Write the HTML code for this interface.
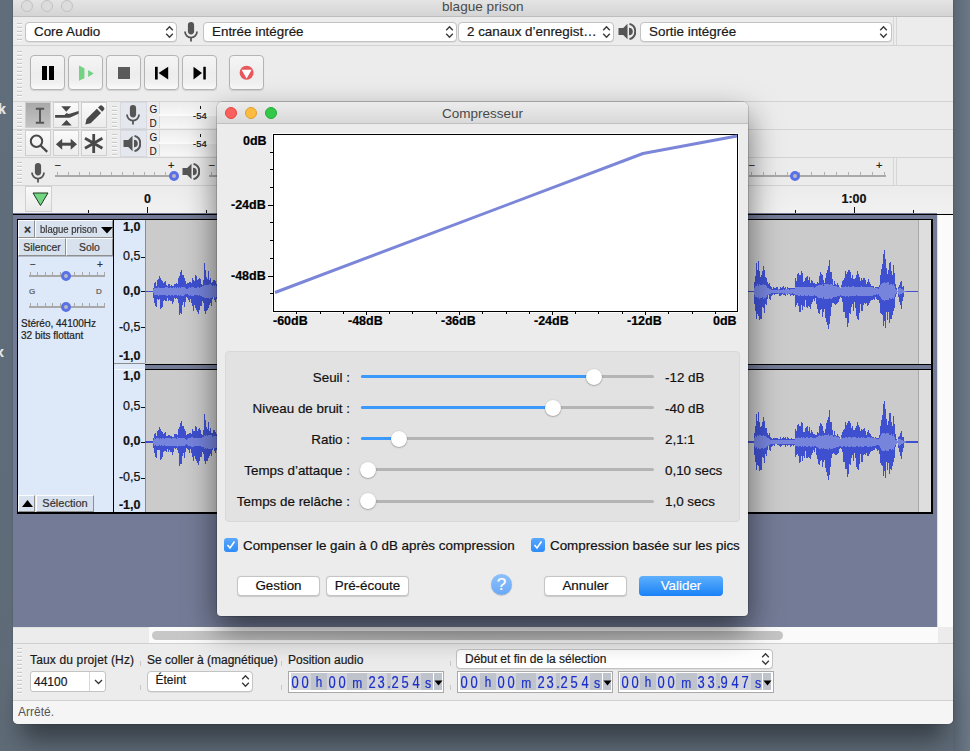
<!DOCTYPE html><html><head><meta charset="utf-8"><style>
html,body{margin:0;padding:0;} div{-webkit-text-stroke:0.2px;} .b{-webkit-text-stroke:0;}
body{width:970px;height:751px;overflow:hidden;position:relative;font-family:"Liberation Sans", sans-serif;
background:linear-gradient(180deg,#5f6b78 0%,#5d6975 60%,#555e68 100%);}
</style></head><body><div style="position:absolute;left:0px;top:0px;width:970px;height:751px;background:linear-gradient(180deg,#606d7a 0%,#5e6b78 70%,#5f6b77 100%);"></div><div style="position:absolute;left:953px;top:0px;width:17px;height:751px;background:linear-gradient(90deg,#5a6673,#6b7885);"></div><div style="position:absolute;left:-2px;top:101px;white-space:nowrap;font-size:14px;font-weight:bold;color:#e8e8e8;">k</div><div style="position:absolute;left:-4px;top:344px;white-space:nowrap;font-size:14px;font-weight:bold;color:#e8e8e8;">x</div><div style="position:absolute;left:22px;top:690px;width:922px;height:50px;background:rgba(20,24,30,0.55);filter:blur(12px);"></div><div style="position:absolute;left:13px;top:0px;width:940px;height:724px;background:#ececec;border-radius:0 0 5px 5px;overflow:hidden;box-shadow:0 0 1.5px rgba(0,0,0,0.35);"></div><div style="position:absolute;left:13px;top:0px;width:940px;height:17px;background:linear-gradient(#e4e4e4,#d4d4d4);border-bottom:1px solid #bdbdbd;box-sizing:border-box;"></div><div style="position:absolute;left:21px;top:-0.5px;width:12px;height:12px;border-radius:50%;background:#dcdcdc;border:1px solid #c2c2c2;box-sizing:border-box;"></div><div style="position:absolute;left:41px;top:-0.5px;width:12px;height:12px;border-radius:50%;background:#dcdcdc;border:1px solid #c2c2c2;box-sizing:border-box;"></div><div style="position:absolute;left:61px;top:-0.5px;width:12px;height:12px;border-radius:50%;background:#dcdcdc;border:1px solid #c2c2c2;box-sizing:border-box;"></div><div style="position:absolute;left:442px;top:-1.5px;white-space:nowrap;font-size:13.6px;color:#4a4a4a;line-height:16px;-webkit-text-stroke:0;">blague prison</div><div style="position:absolute;left:13px;top:45px;width:940px;height:1px;background:#d3d3d3;"></div><div style="position:absolute;left:13px;top:101px;width:940px;height:1px;background:#d3d3d3;"></div><div style="position:absolute;left:13px;top:129px;width:940px;height:1px;background:#d3d3d3;"></div><div style="position:absolute;left:13px;top:157px;width:940px;height:1px;background:#d3d3d3;"></div><div style="position:absolute;left:13px;top:185px;width:940px;height:1px;background:#d3d3d3;"></div><div style="position:absolute;left:17px;top:23px;width:5px;height:1px;background:#c9c9c9;"></div><div style="position:absolute;left:17px;top:24px;width:5px;height:1px;background:#fafafa;"></div><div style="position:absolute;left:17px;top:27px;width:5px;height:1px;background:#c9c9c9;"></div><div style="position:absolute;left:17px;top:28px;width:5px;height:1px;background:#fafafa;"></div><div style="position:absolute;left:17px;top:31px;width:5px;height:1px;background:#c9c9c9;"></div><div style="position:absolute;left:17px;top:32px;width:5px;height:1px;background:#fafafa;"></div><div style="position:absolute;left:17px;top:35px;width:5px;height:1px;background:#c9c9c9;"></div><div style="position:absolute;left:17px;top:36px;width:5px;height:1px;background:#fafafa;"></div><div style="position:absolute;left:17px;top:39px;width:5px;height:1px;background:#c9c9c9;"></div><div style="position:absolute;left:17px;top:40px;width:5px;height:1px;background:#fafafa;"></div><div style="position:absolute;left:25px;top:21.5px;width:152px;height:20px;background:#fff;border:1px solid #c3c3c3;border-radius:4px;box-sizing:border-box;box-shadow:0 0.5px 0.5px rgba(0,0,0,0.12);"></div><div style="position:absolute;left:34px;top:23.5px;white-space:nowrap;font-size:13.4px;color:#1a1a1a;line-height:16px;">Core Audio</div><svg style="position:absolute;left:164.5px;top:24.5px" width="9" height="14" viewBox="0 0 9 14"><path d="M1.2 5.2 L4.5 1.8 L7.8 5.2 M1.2 8.8 L4.5 12.2 L7.8 8.8" fill="none" stroke="#3a3a3a" stroke-width="1.4"/></svg><svg style="position:absolute;left:184px;top:22px" width="14.0" height="20.0" viewBox="0 0 14 20"><rect x="3.9" y="0" width="6.2" height="12.4" rx="3.1" fill="#555"/><path d="M1 9.6 a6 6 0 0 0 12 0" fill="none" stroke="#555" stroke-width="1.8"/><path d="M7 15.4 v4.2" stroke="#555" stroke-width="1.8"/></svg><div style="position:absolute;left:203px;top:21.5px;width:254px;height:20px;background:#fff;border:1px solid #c3c3c3;border-radius:4px;box-sizing:border-box;box-shadow:0 0.5px 0.5px rgba(0,0,0,0.12);"></div><div style="position:absolute;left:212px;top:23.5px;white-space:nowrap;font-size:13.4px;color:#1a1a1a;line-height:16px;">Entrée intégrée</div><svg style="position:absolute;left:444.5px;top:24.5px" width="9" height="14" viewBox="0 0 9 14"><path d="M1.2 5.2 L4.5 1.8 L7.8 5.2 M1.2 8.8 L4.5 12.2 L7.8 8.8" fill="none" stroke="#3a3a3a" stroke-width="1.4"/></svg><div style="position:absolute;left:458px;top:21.5px;width:156px;height:20px;background:#fff;border:1px solid #c3c3c3;border-radius:4px;box-sizing:border-box;box-shadow:0 0.5px 0.5px rgba(0,0,0,0.12);"></div><div style="position:absolute;left:467px;top:23.5px;white-space:nowrap;font-size:13.4px;color:#1a1a1a;line-height:16px;">2 canaux d’enregist…</div><svg style="position:absolute;left:601.5px;top:24.5px" width="9" height="14" viewBox="0 0 9 14"><path d="M1.2 5.2 L4.5 1.8 L7.8 5.2 M1.2 8.8 L4.5 12.2 L7.8 8.8" fill="none" stroke="#3a3a3a" stroke-width="1.4"/></svg><svg style="position:absolute;left:617.5px;top:23px" width="18.0" height="17.0" viewBox="0 0 18 17"><path d="M0.5 5 h4.7 l4.3 -4.2 v15.4 l-4.3 -4.2 h-4.7z" fill="#555"/><path d="M11 4.7 a3.8 3.8 0 0 1 0 7.6z" fill="#555"/><path d="M11.5 0.9 a7.9 7.9 0 0 1 0 15.2" fill="none" stroke="#555" stroke-width="2"/></svg><div style="position:absolute;left:640px;top:21.5px;width:251.5px;height:20px;background:#fff;border:1px solid #c3c3c3;border-radius:4px;box-sizing:border-box;box-shadow:0 0.5px 0.5px rgba(0,0,0,0.12);"></div><div style="position:absolute;left:649px;top:23.5px;white-space:nowrap;font-size:13.4px;color:#1a1a1a;line-height:16px;">Sortie intégrée</div><svg style="position:absolute;left:879.0px;top:24.5px" width="9" height="14" viewBox="0 0 9 14"><path d="M1.2 5.2 L4.5 1.8 L7.8 5.2 M1.2 8.8 L4.5 12.2 L7.8 8.8" fill="none" stroke="#3a3a3a" stroke-width="1.4"/></svg><div style="position:absolute;left:893px;top:17px;width:1px;height:28px;background:#d6d6d6;"></div><div style="position:absolute;left:896px;top:17px;width:1px;height:28px;background:#d6d6d6;"></div><div style="position:absolute;left:17px;top:51px;width:5px;height:1px;background:#c9c9c9;"></div><div style="position:absolute;left:17px;top:52px;width:5px;height:1px;background:#fafafa;"></div><div style="position:absolute;left:17px;top:55px;width:5px;height:1px;background:#c9c9c9;"></div><div style="position:absolute;left:17px;top:56px;width:5px;height:1px;background:#fafafa;"></div><div style="position:absolute;left:17px;top:59px;width:5px;height:1px;background:#c9c9c9;"></div><div style="position:absolute;left:17px;top:60px;width:5px;height:1px;background:#fafafa;"></div><div style="position:absolute;left:17px;top:63px;width:5px;height:1px;background:#c9c9c9;"></div><div style="position:absolute;left:17px;top:64px;width:5px;height:1px;background:#fafafa;"></div><div style="position:absolute;left:17px;top:67px;width:5px;height:1px;background:#c9c9c9;"></div><div style="position:absolute;left:17px;top:68px;width:5px;height:1px;background:#fafafa;"></div><div style="position:absolute;left:17px;top:71px;width:5px;height:1px;background:#c9c9c9;"></div><div style="position:absolute;left:17px;top:72px;width:5px;height:1px;background:#fafafa;"></div><div style="position:absolute;left:17px;top:75px;width:5px;height:1px;background:#c9c9c9;"></div><div style="position:absolute;left:17px;top:76px;width:5px;height:1px;background:#fafafa;"></div><div style="position:absolute;left:17px;top:79px;width:5px;height:1px;background:#c9c9c9;"></div><div style="position:absolute;left:17px;top:80px;width:5px;height:1px;background:#fafafa;"></div><div style="position:absolute;left:17px;top:83px;width:5px;height:1px;background:#c9c9c9;"></div><div style="position:absolute;left:17px;top:84px;width:5px;height:1px;background:#fafafa;"></div><div style="position:absolute;left:17px;top:87px;width:5px;height:1px;background:#c9c9c9;"></div><div style="position:absolute;left:17px;top:88px;width:5px;height:1px;background:#fafafa;"></div><div style="position:absolute;left:17px;top:91px;width:5px;height:1px;background:#c9c9c9;"></div><div style="position:absolute;left:17px;top:92px;width:5px;height:1px;background:#fafafa;"></div><div style="position:absolute;left:17px;top:95px;width:5px;height:1px;background:#c9c9c9;"></div><div style="position:absolute;left:17px;top:96px;width:5px;height:1px;background:#fafafa;"></div><div style="position:absolute;left:30px;top:55px;width:35px;height:35px;background:linear-gradient(#f5f5f5,#ededed 55%,#f0f0f0 80%,#fbfbfb);border:1px solid #b4b4b4;border-radius:4px;box-sizing:border-box;box-shadow:0 1px 1px rgba(0,0,0,0.12);"><div style="position:absolute;left:10.7px;top:10.3px;width:5.1px;height:13.4px;background:#000"></div><div style="position:absolute;left:17.8px;top:10.3px;width:5.1px;height:13.4px;background:#000"></div></div><div style="position:absolute;left:68px;top:55px;width:35px;height:35px;background:linear-gradient(#f5f5f5,#ededed 55%,#f0f0f0 80%,#fbfbfb);border:1px solid #b4b4b4;border-radius:4px;box-sizing:border-box;box-shadow:0 1px 1px rgba(0,0,0,0.12);"><svg style="position:absolute;left:-1px;top:-1px" width="35" height="35"><path d="M11 10.5 L16.4 13.2 L16.4 23.3 L11 25.7z" fill="#74d283"/><path d="M20.1 15 L25.7 18.5 L20.1 22z" fill="#74d283"/></svg></div><div style="position:absolute;left:106px;top:55px;width:35px;height:35px;background:linear-gradient(#f5f5f5,#ededed 55%,#f0f0f0 80%,#fbfbfb);border:1px solid #b4b4b4;border-radius:4px;box-sizing:border-box;box-shadow:0 1px 1px rgba(0,0,0,0.12);"><div style="position:absolute;left:10.9px;top:11px;width:11.8px;height:12.2px;background:#5a5a5a"></div></div><div style="position:absolute;left:144px;top:55px;width:35px;height:35px;background:linear-gradient(#f5f5f5,#ededed 55%,#f0f0f0 80%,#fbfbfb);border:1px solid #b4b4b4;border-radius:4px;box-sizing:border-box;box-shadow:0 1px 1px rgba(0,0,0,0.12);"><svg style="position:absolute;left:-1px;top:-1px" width="35" height="35"><rect x="11" y="11.8" width="2.7" height="12.7" fill="#000"/><path d="M24.2 11.8 L14.6 18.1 L24.2 24.5z" fill="#000"/></svg></div><div style="position:absolute;left:182px;top:55px;width:35px;height:35px;background:linear-gradient(#f5f5f5,#ededed 55%,#f0f0f0 80%,#fbfbfb);border:1px solid #b4b4b4;border-radius:4px;box-sizing:border-box;box-shadow:0 1px 1px rgba(0,0,0,0.12);"><svg style="position:absolute;left:-1px;top:-1px" width="35" height="35"><rect x="21.3" y="11.8" width="2.5" height="12.7" fill="#000"/><path d="M11.5 11.8 L20 18.1 L11.5 24.5z" fill="#000"/></svg></div><div style="position:absolute;left:228.5px;top:55px;width:35.5px;height:35px;background:linear-gradient(#f5f5f5,#ededed 55%,#f0f0f0 80%,#fbfbfb);border:1px solid #b4b4b4;border-radius:4px;box-sizing:border-box;box-shadow:0 1px 1px rgba(0,0,0,0.12);"><svg style="position:absolute;left:-1px;top:-1px" width="35" height="35"><circle cx="17.6" cy="17.8" r="7" fill="#e8585a"/><path d="M12.6 14.8 h10 l-5 8.8z" fill="#fff"/></svg></div><div style="position:absolute;left:17px;top:106px;width:5px;height:1px;background:#c9c9c9;"></div><div style="position:absolute;left:17px;top:107px;width:5px;height:1px;background:#fafafa;"></div><div style="position:absolute;left:17px;top:110px;width:5px;height:1px;background:#c9c9c9;"></div><div style="position:absolute;left:17px;top:111px;width:5px;height:1px;background:#fafafa;"></div><div style="position:absolute;left:17px;top:114px;width:5px;height:1px;background:#c9c9c9;"></div><div style="position:absolute;left:17px;top:115px;width:5px;height:1px;background:#fafafa;"></div><div style="position:absolute;left:17px;top:118px;width:5px;height:1px;background:#c9c9c9;"></div><div style="position:absolute;left:17px;top:119px;width:5px;height:1px;background:#fafafa;"></div><div style="position:absolute;left:17px;top:122px;width:5px;height:1px;background:#c9c9c9;"></div><div style="position:absolute;left:17px;top:123px;width:5px;height:1px;background:#fafafa;"></div><div style="position:absolute;left:17px;top:126px;width:5px;height:1px;background:#c9c9c9;"></div><div style="position:absolute;left:17px;top:127px;width:5px;height:1px;background:#fafafa;"></div><div style="position:absolute;left:17px;top:130px;width:5px;height:1px;background:#c9c9c9;"></div><div style="position:absolute;left:17px;top:131px;width:5px;height:1px;background:#fafafa;"></div><div style="position:absolute;left:17px;top:134px;width:5px;height:1px;background:#c9c9c9;"></div><div style="position:absolute;left:17px;top:135px;width:5px;height:1px;background:#fafafa;"></div><div style="position:absolute;left:17px;top:138px;width:5px;height:1px;background:#c9c9c9;"></div><div style="position:absolute;left:17px;top:139px;width:5px;height:1px;background:#fafafa;"></div><div style="position:absolute;left:17px;top:142px;width:5px;height:1px;background:#c9c9c9;"></div><div style="position:absolute;left:17px;top:143px;width:5px;height:1px;background:#fafafa;"></div><div style="position:absolute;left:17px;top:146px;width:5px;height:1px;background:#c9c9c9;"></div><div style="position:absolute;left:17px;top:147px;width:5px;height:1px;background:#fafafa;"></div><div style="position:absolute;left:17px;top:150px;width:5px;height:1px;background:#c9c9c9;"></div><div style="position:absolute;left:17px;top:151px;width:5px;height:1px;background:#fafafa;"></div><div style="position:absolute;left:25px;top:102px;width:26px;height:26px;background:linear-gradient(#a9a9a9,#c4c4c4);border:1px solid #cfcfcf;box-sizing:border-box;"><svg style="position:absolute;left:-1px;top:-1px" width="26" height="27"><path d="M10.8 6.8 h8.3 M15 6.8 v14.9 M10.8 20.8 h8.3" stroke="#555" stroke-width="1.9" fill="none"/></svg></div><div style="position:absolute;left:53px;top:102px;width:26px;height:26px;background:linear-gradient(#fafafa,#ececec);border:1px solid #cfcfcf;box-sizing:border-box;"><svg style="position:absolute;left:-1px;top:-1px" width="27" height="27"><path d="M8.3 4.2 H18.1 L13.3 9.8z M8.3 23.6 H18.7 L13.5 18z" fill="#484848"/><path d="M2.1 13.1 H11.6 L13.5 10.9 L15.8 12 L25.6 9 V11.8 L16.6 15.8 H2.1 Z" fill="#484848"/></svg></div><div style="position:absolute;left:81px;top:102px;width:26px;height:26px;background:linear-gradient(#fafafa,#ececec);border:1px solid #cfcfcf;box-sizing:border-box;"><svg style="position:absolute;left:-1px;top:-1px" width="26" height="27"><path d="M4.3 22.5 L5.5 17 L15.8 6.7 L20 10.9 L9.7 21.2z" fill="#484848"/><path d="M17 5.5 L18.6 3.9 a2 2 0 0 1 2.9 0 l1.3 1.3 a2 2 0 0 1 0 2.9 L21.2 9.7z" fill="#484848"/></svg></div><div style="position:absolute;left:25px;top:130px;width:26px;height:26px;background:linear-gradient(#fafafa,#ececec);border:1px solid #cfcfcf;box-sizing:border-box;"><svg style="position:absolute;left:-1px;top:-1px" width="26" height="27"><circle cx="11.5" cy="11.3" r="5.7" stroke="#484848" stroke-width="2" fill="none"/><path d="M15.6 15.5 L22.2 21.8" stroke="#484848" stroke-width="2.3"/></svg></div><div style="position:absolute;left:53px;top:130px;width:26px;height:26px;background:linear-gradient(#fafafa,#ececec);border:1px solid #cfcfcf;box-sizing:border-box;"><svg style="position:absolute;left:-1px;top:-1px" width="26" height="27"><path d="M2.9 14.2 L9.2 8.7 v11z M24 14.2 L17.7 8.7 v11z" fill="#484848"/><path d="M8 14.2 h11" stroke="#484848" stroke-width="3"/></svg></div><div style="position:absolute;left:81px;top:130px;width:26px;height:26px;background:linear-gradient(#fafafa,#ececec);border:1px solid #cfcfcf;box-sizing:border-box;"><svg style="position:absolute;left:-1px;top:-1px" width="26" height="27"><path d="M12.7 4 v19 M4 8.3 L21.4 18.3 M4 18.3 L21.4 8.3" stroke="#484848" stroke-width="2.8"/></svg></div><div style="position:absolute;left:112px;top:106px;width:5px;height:1px;background:#c9c9c9;"></div><div style="position:absolute;left:112px;top:107px;width:5px;height:1px;background:#fafafa;"></div><div style="position:absolute;left:112px;top:110px;width:5px;height:1px;background:#c9c9c9;"></div><div style="position:absolute;left:112px;top:111px;width:5px;height:1px;background:#fafafa;"></div><div style="position:absolute;left:112px;top:114px;width:5px;height:1px;background:#c9c9c9;"></div><div style="position:absolute;left:112px;top:115px;width:5px;height:1px;background:#fafafa;"></div><div style="position:absolute;left:112px;top:118px;width:5px;height:1px;background:#c9c9c9;"></div><div style="position:absolute;left:112px;top:119px;width:5px;height:1px;background:#fafafa;"></div><div style="position:absolute;left:112px;top:122px;width:5px;height:1px;background:#c9c9c9;"></div><div style="position:absolute;left:112px;top:123px;width:5px;height:1px;background:#fafafa;"></div><div style="position:absolute;left:112px;top:126px;width:5px;height:1px;background:#c9c9c9;"></div><div style="position:absolute;left:112px;top:127px;width:5px;height:1px;background:#fafafa;"></div><div style="position:absolute;left:112px;top:134px;width:5px;height:1px;background:#c9c9c9;"></div><div style="position:absolute;left:112px;top:135px;width:5px;height:1px;background:#fafafa;"></div><div style="position:absolute;left:112px;top:138px;width:5px;height:1px;background:#c9c9c9;"></div><div style="position:absolute;left:112px;top:139px;width:5px;height:1px;background:#fafafa;"></div><div style="position:absolute;left:112px;top:142px;width:5px;height:1px;background:#c9c9c9;"></div><div style="position:absolute;left:112px;top:143px;width:5px;height:1px;background:#fafafa;"></div><div style="position:absolute;left:112px;top:146px;width:5px;height:1px;background:#c9c9c9;"></div><div style="position:absolute;left:112px;top:147px;width:5px;height:1px;background:#fafafa;"></div><div style="position:absolute;left:112px;top:150px;width:5px;height:1px;background:#c9c9c9;"></div><div style="position:absolute;left:112px;top:151px;width:5px;height:1px;background:#fafafa;"></div><div style="position:absolute;left:112px;top:154px;width:5px;height:1px;background:#c9c9c9;"></div><div style="position:absolute;left:112px;top:155px;width:5px;height:1px;background:#fafafa;"></div><div style="position:absolute;left:120px;top:102px;width:27px;height:27px;background:#e4e8ee;border:1px solid #d6dae0;box-sizing:border-box;"></div><svg style="position:absolute;left:126px;top:105px" width="14.0" height="20.0" viewBox="0 0 14 20"><rect x="3.9" y="0" width="6.2" height="12.4" rx="3.1" fill="#555"/><path d="M1 9.6 a6 6 0 0 0 12 0" fill="none" stroke="#555" stroke-width="1.8"/><path d="M7 15.4 v4.2" stroke="#555" stroke-width="1.8"/></svg><div style="position:absolute;left:120px;top:130px;width:27px;height:27px;background:#e4e8ee;border:1px solid #d6dae0;box-sizing:border-box;"></div><svg style="position:absolute;left:122.5px;top:135px" width="18.0" height="17.0" viewBox="0 0 18 17"><path d="M0.5 5 h4.7 l4.3 -4.2 v15.4 l-4.3 -4.2 h-4.7z" fill="#555"/><path d="M11 4.7 a3.8 3.8 0 0 1 0 7.6z" fill="#555"/><path d="M11.5 0.9 a7.9 7.9 0 0 1 0 15.2" fill="none" stroke="#555" stroke-width="2"/></svg><div style="position:absolute;left:149.5px;top:102.5px;white-space:nowrap;font-size:10px;color:#111;line-height:13px;-webkit-text-stroke:0;">G</div><div style="position:absolute;left:159px;top:102px;width:260px;height:12px;background:linear-gradient(#ededed,#f7f7f7);border-left:1px solid #d8d8d8;box-sizing:border-box;"></div><div style="position:absolute;left:149.5px;top:116.5px;white-space:nowrap;font-size:10px;color:#111;line-height:13px;-webkit-text-stroke:0;">D</div><div style="position:absolute;left:159px;top:116px;width:260px;height:12px;background:linear-gradient(#ededed,#f7f7f7);border-left:1px solid #d8d8d8;box-sizing:border-box;"></div><div style="position:absolute;left:149.5px;top:130.5px;white-space:nowrap;font-size:10px;color:#111;line-height:13px;-webkit-text-stroke:0;">G</div><div style="position:absolute;left:159px;top:130px;width:260px;height:12px;background:linear-gradient(#ededed,#f7f7f7);border-left:1px solid #d8d8d8;box-sizing:border-box;"></div><div style="position:absolute;left:149.5px;top:144.5px;white-space:nowrap;font-size:10px;color:#111;line-height:13px;-webkit-text-stroke:0;">D</div><div style="position:absolute;left:159px;top:144px;width:260px;height:12px;background:linear-gradient(#ededed,#f7f7f7);border-left:1px solid #d8d8d8;box-sizing:border-box;"></div><div style="position:absolute;left:159px;top:114px;width:260px;height:2px;background:#fafafa;"></div><div style="position:absolute;left:159px;top:142px;width:260px;height:2px;background:#fafafa;"></div><div style="position:absolute;left:193px;top:110px;white-space:nowrap;font-size:9.5px;color:#111;line-height:11px;">-54</div><div style="position:absolute;left:193px;top:138px;white-space:nowrap;font-size:9.5px;color:#111;line-height:11px;">-54</div><div style="position:absolute;left:200px;top:106px;width:1px;height:3px;background:#111;"></div><div style="position:absolute;left:200px;top:134px;width:1px;height:3px;background:#111;"></div><div style="position:absolute;left:17px;top:162px;width:5px;height:1px;background:#c9c9c9;"></div><div style="position:absolute;left:17px;top:163px;width:5px;height:1px;background:#fafafa;"></div><div style="position:absolute;left:17px;top:166px;width:5px;height:1px;background:#c9c9c9;"></div><div style="position:absolute;left:17px;top:167px;width:5px;height:1px;background:#fafafa;"></div><div style="position:absolute;left:17px;top:170px;width:5px;height:1px;background:#c9c9c9;"></div><div style="position:absolute;left:17px;top:171px;width:5px;height:1px;background:#fafafa;"></div><div style="position:absolute;left:17px;top:174px;width:5px;height:1px;background:#c9c9c9;"></div><div style="position:absolute;left:17px;top:175px;width:5px;height:1px;background:#fafafa;"></div><div style="position:absolute;left:17px;top:178px;width:5px;height:1px;background:#c9c9c9;"></div><div style="position:absolute;left:17px;top:179px;width:5px;height:1px;background:#fafafa;"></div><div style="position:absolute;left:17px;top:182px;width:5px;height:1px;background:#c9c9c9;"></div><div style="position:absolute;left:17px;top:183px;width:5px;height:1px;background:#fafafa;"></div><svg style="position:absolute;left:31px;top:162.5px" width="14.0" height="20.0" viewBox="0 0 14 20"><rect x="3.9" y="0" width="6.2" height="12.4" rx="3.1" fill="#555"/><path d="M1 9.6 a6 6 0 0 0 12 0" fill="none" stroke="#555" stroke-width="1.8"/><path d="M7 15.4 v4.2" stroke="#555" stroke-width="1.8"/></svg><div style="position:absolute;left:55px;top:175px;width:123px;height:2px;background:#a9a9a9;"></div><div style="position:absolute;left:57px;top:172px;width:1px;height:3px;background:#b0b0b0;"></div><div style="position:absolute;left:68px;top:172px;width:1px;height:3px;background:#b0b0b0;"></div><div style="position:absolute;left:79px;top:172px;width:1px;height:3px;background:#b0b0b0;"></div><div style="position:absolute;left:89px;top:172px;width:1px;height:3px;background:#b0b0b0;"></div><div style="position:absolute;left:100px;top:172px;width:1px;height:3px;background:#b0b0b0;"></div><div style="position:absolute;left:111px;top:172px;width:1px;height:3px;background:#b0b0b0;"></div><div style="position:absolute;left:122px;top:172px;width:1px;height:3px;background:#b0b0b0;"></div><div style="position:absolute;left:133px;top:172px;width:1px;height:3px;background:#b0b0b0;"></div><div style="position:absolute;left:144px;top:172px;width:1px;height:3px;background:#b0b0b0;"></div><div style="position:absolute;left:154px;top:172px;width:1px;height:3px;background:#b0b0b0;"></div><div style="position:absolute;left:165px;top:172px;width:1px;height:3px;background:#b0b0b0;"></div><div style="position:absolute;left:176px;top:172px;width:1px;height:3px;background:#b0b0b0;"></div><div style="position:absolute;left:54.5px;top:159px;white-space:nowrap;font-size:11px;color:#222;">−</div><div style="position:absolute;left:168px;top:159px;white-space:nowrap;font-size:11px;color:#222;">+</div><div style="position:absolute;left:169px;top:171px;width:10px;height:10px;border-radius:50%;background:#b9b9c4;border:3px solid #5a71e6;box-sizing:border-box;"></div><svg style="position:absolute;left:181.7px;top:163px" width="18.0" height="17.0" viewBox="0 0 18 17"><path d="M0.5 5 h4.7 l4.3 -4.2 v15.4 l-4.3 -4.2 h-4.7z" fill="#555"/><path d="M11 4.7 a3.8 3.8 0 0 1 0 7.6z" fill="#555"/><path d="M11.5 0.9 a7.9 7.9 0 0 1 0 15.2" fill="none" stroke="#555" stroke-width="2"/></svg><div style="position:absolute;left:209px;top:175px;width:131px;height:2px;background:#a9a9a9;"></div><div style="position:absolute;left:211px;top:172px;width:1px;height:3px;background:#b0b0b0;"></div><div style="position:absolute;left:223px;top:172px;width:1px;height:3px;background:#b0b0b0;"></div><div style="position:absolute;left:234px;top:172px;width:1px;height:3px;background:#b0b0b0;"></div><div style="position:absolute;left:246px;top:172px;width:1px;height:3px;background:#b0b0b0;"></div><div style="position:absolute;left:257px;top:172px;width:1px;height:3px;background:#b0b0b0;"></div><div style="position:absolute;left:269px;top:172px;width:1px;height:3px;background:#b0b0b0;"></div><div style="position:absolute;left:280px;top:172px;width:1px;height:3px;background:#b0b0b0;"></div><div style="position:absolute;left:292px;top:172px;width:1px;height:3px;background:#b0b0b0;"></div><div style="position:absolute;left:303px;top:172px;width:1px;height:3px;background:#b0b0b0;"></div><div style="position:absolute;left:315px;top:172px;width:1px;height:3px;background:#b0b0b0;"></div><div style="position:absolute;left:326px;top:172px;width:1px;height:3px;background:#b0b0b0;"></div><div style="position:absolute;left:338px;top:172px;width:1px;height:3px;background:#b0b0b0;"></div><div style="position:absolute;left:208.5px;top:159px;white-space:nowrap;font-size:11px;color:#222;">−</div><div style="position:absolute;left:330px;top:159px;white-space:nowrap;font-size:11px;color:#222;">+</div><div style="position:absolute;left:295px;top:171px;width:10px;height:10px;border-radius:50%;background:#b9b9c4;border:3px solid #5a71e6;box-sizing:border-box;"></div><div style="position:absolute;left:749px;top:175px;width:137px;height:2px;background:#a9a9a9;"></div><div style="position:absolute;left:751px;top:172px;width:1px;height:3px;background:#b0b0b0;"></div><div style="position:absolute;left:763px;top:172px;width:1px;height:3px;background:#b0b0b0;"></div><div style="position:absolute;left:775px;top:172px;width:1px;height:3px;background:#b0b0b0;"></div><div style="position:absolute;left:787px;top:172px;width:1px;height:3px;background:#b0b0b0;"></div><div style="position:absolute;left:799px;top:172px;width:1px;height:3px;background:#b0b0b0;"></div><div style="position:absolute;left:811px;top:172px;width:1px;height:3px;background:#b0b0b0;"></div><div style="position:absolute;left:824px;top:172px;width:1px;height:3px;background:#b0b0b0;"></div><div style="position:absolute;left:836px;top:172px;width:1px;height:3px;background:#b0b0b0;"></div><div style="position:absolute;left:848px;top:172px;width:1px;height:3px;background:#b0b0b0;"></div><div style="position:absolute;left:860px;top:172px;width:1px;height:3px;background:#b0b0b0;"></div><div style="position:absolute;left:872px;top:172px;width:1px;height:3px;background:#b0b0b0;"></div><div style="position:absolute;left:884px;top:172px;width:1px;height:3px;background:#b0b0b0;"></div><div style="position:absolute;left:748.5px;top:159px;white-space:nowrap;font-size:11px;color:#222;">−</div><div style="position:absolute;left:876px;top:159px;white-space:nowrap;font-size:11px;color:#222;">+</div><div style="position:absolute;left:790px;top:171px;width:10px;height:10px;border-radius:50%;background:#b9b9c4;border:3px solid #5a71e6;box-sizing:border-box;"></div><div style="position:absolute;left:893px;top:158px;width:1px;height:27px;background:#d6d6d6;"></div><div style="position:absolute;left:896px;top:158px;width:1px;height:27px;background:#d6d6d6;"></div><div style="position:absolute;left:13px;top:186px;width:940px;height:27px;background:linear-gradient(#ececec,#f1f1f1);"></div><div style="position:absolute;left:25px;top:186px;width:27px;height:26px;background:linear-gradient(#fafafa,#eaeaea);border:1px solid #d0d0d0;box-sizing:border-box;"><svg style="position:absolute;left:6px;top:5px" width="17" height="14"><path d="M1 1 h15 l-7.5 12.5z" fill="#72d682" stroke="#1e3a22" stroke-width="1"/></svg></div><div style="position:absolute;left:88px;top:210px;width:1px;height:3px;background:#111;"></div><div style="position:absolute;left:147px;top:207px;width:1px;height:6px;background:#111;"></div><div style="position:absolute;left:206px;top:210px;width:1px;height:3px;background:#111;"></div><div style="position:absolute;left:265px;top:210px;width:1px;height:3px;background:#111;"></div><div style="position:absolute;left:324px;top:210px;width:1px;height:3px;background:#111;"></div><div style="position:absolute;left:383px;top:210px;width:1px;height:3px;background:#111;"></div><div style="position:absolute;left:442px;top:210px;width:1px;height:3px;background:#111;"></div><div style="position:absolute;left:501px;top:210px;width:1px;height:3px;background:#111;"></div><div style="position:absolute;left:560px;top:210px;width:1px;height:3px;background:#111;"></div><div style="position:absolute;left:619px;top:210px;width:1px;height:3px;background:#111;"></div><div style="position:absolute;left:678px;top:210px;width:1px;height:3px;background:#111;"></div><div style="position:absolute;left:736px;top:210px;width:1px;height:3px;background:#111;"></div><div style="position:absolute;left:795px;top:210px;width:1px;height:3px;background:#111;"></div><div style="position:absolute;left:854px;top:207px;width:1px;height:6px;background:#111;"></div><div style="position:absolute;left:913px;top:210px;width:1px;height:3px;background:#111;"></div><div style="position:absolute;left:144px;top:192px;white-space:nowrap;font-size:12.5px;font-weight:bold;color:#111;line-height:14px;">0</div><div style="position:absolute;left:841.5px;top:192px;white-space:nowrap;font-size:12.5px;font-weight:bold;color:#111;line-height:14px;">1:00</div><div style="position:absolute;left:13px;top:213px;width:924px;height:414px;background:#737b96;"></div><div style="position:absolute;left:13px;top:213.5px;width:940px;height:1.2px;background:#000;"></div><div style="position:absolute;left:937px;top:215px;width:16px;height:412px;background:#fbfbfb;border-left:1px solid #dedede;box-sizing:border-box;"></div><div style="position:absolute;left:17px;top:219px;width:916px;height:295px;background:#000;"></div><div style="position:absolute;left:18px;top:220px;width:95px;height:292px;background:#dde8f8;"></div><div style="position:absolute;left:114px;top:220px;width:31px;height:292px;background:#dde8f8;"></div><div style="position:absolute;left:145px;top:220px;width:773px;height:144px;background:#cbcbcb;"></div><div style="position:absolute;left:145px;top:370px;width:773px;height:142px;background:#cbcbcb;"></div><div style="position:absolute;left:917.5px;top:220px;width:13.5px;height:144px;background:#dedede;border-left:1px solid #a8a8a8;box-sizing:border-box;"></div><div style="position:absolute;left:917.5px;top:370px;width:13.5px;height:142px;background:#dedede;border-left:1px solid #a8a8a8;box-sizing:border-box;"></div><div style="position:absolute;left:114px;top:363px;width:31px;height:7px;background:#dde8f8;border-top:1px solid #8c8c8c;border-bottom:1px solid #f8fbff;box-sizing:border-box;"></div><div style="position:absolute;left:145px;top:363.5px;width:786px;height:6.5px;background:#737b96;border-top:1px solid #000;border-bottom:1px solid #000;box-sizing:border-box;"></div><div style="position:absolute;left:18px;top:220px;width:17px;height:18px;background:#d8e1ee;border-top:1px solid #fbfdff;border-left:1px solid #fbfdff;border-bottom:1px solid #8f8f8f;border-right:1px solid #8f8f8f;box-sizing:border-box;font-size:11px;color:#333;text-align:center;line-height:16px;"><span style="font-size:12px;font-weight:bold;position:relative;left:1px;top:0.5px">×</span></div><div style="position:absolute;left:35px;top:220px;width:78px;height:18px;background:#d8e1ee;border-top:1px solid #fbfdff;border-left:1px solid #fbfdff;border-bottom:1px solid #8f8f8f;border-right:1px solid #8f8f8f;box-sizing:border-box;font-size:11px;color:#333;text-align:center;line-height:16px;"><span style="position:absolute;left:3.5px;font-size:10.6px;transform:scaleX(0.9);transform-origin:0 50%">blague prison</span><svg style="position:absolute;left:65px;top:5.5px" width="12" height="7"><path d="M0 0 h12 l-6 6.5z" fill="#000"/></svg></div><div style="position:absolute;left:18px;top:238px;width:48px;height:18px;background:#d8e1ee;border-top:1px solid #fbfdff;border-left:1px solid #fbfdff;border-bottom:1px solid #8f8f8f;border-right:1px solid #8f8f8f;box-sizing:border-box;font-size:11px;color:#333;text-align:center;line-height:16px;"><span style="font-size:10.4px">Silencer</span></div><div style="position:absolute;left:66px;top:238px;width:47px;height:18px;background:#d8e1ee;border-top:1px solid #fbfdff;border-left:1px solid #fbfdff;border-bottom:1px solid #8f8f8f;border-right:1px solid #8f8f8f;box-sizing:border-box;font-size:11px;color:#333;text-align:center;line-height:16px;"><span style="font-size:10.4px">Solo</span></div><div style="position:absolute;left:18px;top:256px;width:95px;height:1px;background:#b5bcc8;"></div><div style="position:absolute;left:29px;top:275px;width:76px;height:2px;background:#a8a8a8;"></div><div style="position:absolute;left:30px;top:272px;width:1px;height:3px;background:#a8a8a8;"></div><div style="position:absolute;left:37px;top:272px;width:1px;height:3px;background:#a8a8a8;"></div><div style="position:absolute;left:45px;top:272px;width:1px;height:3px;background:#a8a8a8;"></div><div style="position:absolute;left:52px;top:272px;width:1px;height:3px;background:#a8a8a8;"></div><div style="position:absolute;left:60px;top:272px;width:1px;height:3px;background:#a8a8a8;"></div><div style="position:absolute;left:67px;top:272px;width:1px;height:3px;background:#a8a8a8;"></div><div style="position:absolute;left:74px;top:272px;width:1px;height:3px;background:#a8a8a8;"></div><div style="position:absolute;left:82px;top:272px;width:1px;height:3px;background:#a8a8a8;"></div><div style="position:absolute;left:89px;top:272px;width:1px;height:3px;background:#a8a8a8;"></div><div style="position:absolute;left:97px;top:272px;width:1px;height:3px;background:#a8a8a8;"></div><div style="position:absolute;left:104px;top:272px;width:1px;height:3px;background:#a8a8a8;"></div><div style="position:absolute;left:30px;top:259px;white-space:nowrap;font-size:10px;color:#333;">−</div><div style="position:absolute;left:97px;top:259px;white-space:nowrap;font-size:10px;color:#333;">+</div><div style="position:absolute;left:60.5px;top:271px;width:10px;height:10px;border-radius:50%;background:#b9b9c4;border:3px solid #5a71e6;box-sizing:border-box;"></div><div style="position:absolute;left:29px;top:287px;white-space:nowrap;font-size:8px;color:#555;">G</div><div style="position:absolute;left:96px;top:287px;white-space:nowrap;font-size:8px;color:#555;">D</div><div style="position:absolute;left:29px;top:306px;width:76px;height:2px;background:#a8a8a8;"></div><div style="position:absolute;left:30px;top:303px;width:1px;height:3px;background:#a8a8a8;"></div><div style="position:absolute;left:37px;top:303px;width:1px;height:3px;background:#a8a8a8;"></div><div style="position:absolute;left:45px;top:303px;width:1px;height:3px;background:#a8a8a8;"></div><div style="position:absolute;left:52px;top:303px;width:1px;height:3px;background:#a8a8a8;"></div><div style="position:absolute;left:60px;top:303px;width:1px;height:3px;background:#a8a8a8;"></div><div style="position:absolute;left:67px;top:303px;width:1px;height:3px;background:#a8a8a8;"></div><div style="position:absolute;left:74px;top:303px;width:1px;height:3px;background:#a8a8a8;"></div><div style="position:absolute;left:82px;top:303px;width:1px;height:3px;background:#a8a8a8;"></div><div style="position:absolute;left:89px;top:303px;width:1px;height:3px;background:#a8a8a8;"></div><div style="position:absolute;left:97px;top:303px;width:1px;height:3px;background:#a8a8a8;"></div><div style="position:absolute;left:104px;top:303px;width:1px;height:3px;background:#a8a8a8;"></div><div style="position:absolute;left:61px;top:302px;width:10px;height:10px;border-radius:50%;background:#b9b9c4;border:3px solid #5a71e6;box-sizing:border-box;"></div><div style="position:absolute;left:21px;top:318px;white-space:nowrap;font-size:10px;color:#222;line-height:12px;">Stéréo, 44100Hz</div><div style="position:absolute;left:21px;top:329.5px;white-space:nowrap;font-size:10px;color:#222;line-height:12px;">32 bits flottant</div><div style="position:absolute;left:18px;top:495px;width:17px;height:17px;background:#d8e1ee;border-top:1px solid #fbfdff;border-left:1px solid #fbfdff;border-bottom:1px solid #8f8f8f;border-right:1px solid #8f8f8f;box-sizing:border-box;font-size:11px;color:#333;text-align:center;line-height:15px;"><svg style="position:absolute;left:3px;top:4px" width="11" height="7"><path d="M0 7 h11 l-5.5 -7z" fill="#000"/></svg></div><div style="position:absolute;left:36px;top:495px;width:58px;height:17px;background:#d8e1ee;border-top:1px solid #fbfdff;border-left:1px solid #fbfdff;border-bottom:1px solid #8f8f8f;border-right:1px solid #8f8f8f;box-sizing:border-box;font-size:11px;color:#333;text-align:center;line-height:15px;">Sélection</div><div style="position:absolute;left:113.5px;top:219.89999999999998px;white-space:nowrap;font-size:12.5px;font-weight:bold;color:#111;line-height:14px;"><div style="width:27px;text-align:right">1,0</div></div><div style="position:absolute;left:113.5px;top:248.8px;white-space:nowrap;font-size:12.5px;font-weight:normal;color:#111;line-height:14px;"><div style="width:27px;text-align:right">0,5</div></div><div style="position:absolute;left:113.5px;top:283.59999999999997px;white-space:nowrap;font-size:12.5px;font-weight:bold;color:#111;line-height:14px;"><div style="width:27px;text-align:right">0,0</div></div><div style="position:absolute;left:113.5px;top:319.59999999999997px;white-space:nowrap;font-size:12.5px;font-weight:normal;color:#111;line-height:14px;"><div style="width:27px;text-align:right">-0,5</div></div><div style="position:absolute;left:113.5px;top:348.5px;white-space:nowrap;font-size:12.5px;font-weight:bold;color:#111;line-height:14px;"><div style="width:27px;text-align:right">-1,0</div></div><div style="position:absolute;left:113.5px;top:369.4px;white-space:nowrap;font-size:12.5px;font-weight:bold;color:#111;line-height:14px;"><div style="width:27px;text-align:right">1,0</div></div><div style="position:absolute;left:113.5px;top:398.9px;white-space:nowrap;font-size:12.5px;font-weight:normal;color:#111;line-height:14px;"><div style="width:27px;text-align:right">0,5</div></div><div style="position:absolute;left:113.5px;top:434.2px;white-space:nowrap;font-size:12.5px;font-weight:bold;color:#111;line-height:14px;"><div style="width:27px;text-align:right">0,0</div></div><div style="position:absolute;left:113.5px;top:470.09999999999997px;white-space:nowrap;font-size:12.5px;font-weight:normal;color:#111;line-height:14px;"><div style="width:27px;text-align:right">-0,5</div></div><div style="position:absolute;left:113.5px;top:497.7px;white-space:nowrap;font-size:12.5px;font-weight:bold;color:#111;line-height:14px;"><div style="width:27px;text-align:right">-1,0</div></div><div style="position:absolute;left:141px;top:257px;width:4px;height:1px;background:#111;"></div><div style="position:absolute;left:141px;top:291px;width:4px;height:1px;background:#111;"></div><div style="position:absolute;left:141px;top:327px;width:4px;height:1px;background:#111;"></div><div style="position:absolute;left:141px;top:407px;width:4px;height:1px;background:#111;"></div><div style="position:absolute;left:141px;top:442px;width:4px;height:1px;background:#111;"></div><div style="position:absolute;left:141px;top:478px;width:4px;height:1px;background:#111;"></div><div style="position:absolute;left:145px;top:220px;width:1px;height:143px;background:#8c8c8c;"></div><div style="position:absolute;left:145px;top:370px;width:1px;height:142px;background:#8c8c8c;"></div><svg style="position:absolute;left:0;top:0" width="970" height="751"><path d="M145 290.6h1V292.2h-1zM146 290.6h1V292.2h-1zM147 290.6h1V292.2h-1zM148 290.6h1V292.2h-1zM149 290.6h1V292.2h-1zM150 290.6h1V292.2h-1zM151 290.6h1V292.2h-1zM152 290.6h1V292.2h-1zM153 287.6h1V297.7h-1zM154 283.1h1V302.6h-1zM155 281.9h1V306.4h-1zM156 285.5h1V307.4h-1zM157 280.2h1V299.4h-1zM158 278.9h1V299.6h-1zM159 276.4h1V299.0h-1zM160 278.3h1V309.2h-1zM161 280.2h1V307.9h-1zM162 281.2h1V306.5h-1zM163 283.0h1V301.4h-1zM164 282.4h1V300.4h-1zM165 281.0h1V300.5h-1zM166 285.0h1V301.2h-1zM167 285.8h1V298.1h-1zM168 284.0h1V300.9h-1zM169 284.3h1V299.7h-1zM170 285.6h1V301.2h-1zM171 285.4h1V301.3h-1zM172 286.0h1V304.3h-1zM173 285.9h1V301.7h-1zM174 283.6h1V297.7h-1zM175 283.5h1V298.5h-1zM176 283.2h1V297.7h-1zM177 284.4h1V298.9h-1zM178 278.3h1V302.8h-1zM179 276.2h1V315.2h-1zM180 272.4h1V313.3h-1zM181 270.2h1V313.7h-1zM182 275.0h1V305.3h-1zM183 275.4h1V301.9h-1zM184 278.4h1V306.9h-1zM185 280.5h1V301.5h-1zM186 284.2h1V296.9h-1zM187 283.0h1V298.2h-1zM188 282.9h1V299.8h-1zM189 282.1h1V302.1h-1zM190 281.9h1V298.7h-1zM191 283.1h1V302.5h-1zM192 277.9h1V305.9h-1zM193 280.4h1V310.7h-1zM194 280.5h1V305.2h-1zM195 274.9h1V308.4h-1zM196 276.3h1V310.0h-1zM197 280.3h1V312.4h-1zM198 278.8h1V313.9h-1zM199 277.7h1V310.3h-1zM200 279.4h1V306.3h-1zM201 283.8h1V306.1h-1zM202 284.6h1V301.1h-1zM203 279.8h1V303.2h-1zM204 263.4h1V310.7h-1zM205 269.5h1V313.6h-1zM206 276.5h1V310.8h-1zM207 278.6h1V310.1h-1zM208 270.9h1V307.5h-1zM209 280.1h1V305.1h-1zM210 277.5h1V303.1h-1zM211 282.6h1V305.7h-1zM212 282.0h1V299.4h-1zM213 279.6h1V297.4h-1zM214 279.8h1V300.1h-1zM215 281.1h1V302.1h-1zM216 283.5h1V299.1h-1zM217 285.2h1V300.6h-1zM748 290.6h1V292.2h-1zM749 290.6h1V292.2h-1zM750 290.6h1V292.2h-1zM751 290.6h1V292.2h-1zM752 290.6h1V292.2h-1zM753 290.6h1V292.2h-1zM754 282.0h1V304.3h-1zM755 275.6h1V310.9h-1zM756 263.1h1V319.2h-1zM757 270.2h1V314.2h-1zM758 261.1h1V315.6h-1zM759 271.1h1V320.2h-1zM760 276.7h1V319.0h-1zM761 275.1h1V319.3h-1zM762 271.1h1V306.7h-1zM763 265.9h1V307.6h-1zM764 270.0h1V312.8h-1zM765 276.9h1V303.7h-1zM766 277.7h1V305.0h-1zM767 282.4h1V299.2h-1zM768 284.2h1V295.1h-1zM769 282.7h1V299.0h-1zM770 286.4h1V300.4h-1zM771 287.3h1V295.9h-1zM772 288.6h1V295.3h-1zM773 287.3h1V294.3h-1zM774 287.6h1V294.9h-1zM775 287.8h1V293.6h-1zM776 287.4h1V293.5h-1zM777 287.1h1V294.3h-1zM778 288.6h1V294.2h-1zM779 288.7h1V295.8h-1zM780 286.5h1V296.0h-1zM781 288.1h1V295.3h-1zM782 287.1h1V294.2h-1zM783 286.4h1V294.8h-1zM784 287.8h1V294.7h-1zM785 286.8h1V296.1h-1zM786 288.7h1V294.4h-1zM787 286.8h1V295.1h-1zM788 287.5h1V294.4h-1zM789 288.2h1V294.4h-1zM790 288.3h1V296.0h-1zM791 287.5h1V295.3h-1zM792 288.1h1V294.6h-1zM793 288.2h1V295.7h-1zM794 288.3h1V294.6h-1zM795 278.4h1V306.6h-1zM796 280.6h1V304.7h-1zM797 274.0h1V303.3h-1zM798 273.4h1V305.7h-1zM799 275.2h1V311.9h-1zM800 275.4h1V311.5h-1zM801 271.4h1V305.2h-1zM802 272.8h1V310.3h-1zM803 281.5h1V305.8h-1zM804 281.2h1V307.2h-1zM805 277.6h1V299.9h-1zM806 276.5h1V306.9h-1zM807 275.8h1V307.8h-1zM808 280.4h1V305.9h-1zM809 276.8h1V307.2h-1zM810 282.5h1V308.7h-1zM811 279.7h1V304.4h-1zM812 281.2h1V302.4h-1zM813 283.2h1V298.9h-1zM814 283.1h1V301.2h-1zM815 284.2h1V297.8h-1zM816 284.1h1V304.4h-1zM817 281.6h1V308.6h-1zM818 282.8h1V313.1h-1zM819 275.6h1V314.0h-1zM820 272.2h1V310.4h-1zM821 273.8h1V309.3h-1zM822 275.2h1V316.5h-1zM823 279.9h1V311.7h-1zM824 282.7h1V309.3h-1zM825 278.4h1V317.5h-1zM826 272.8h1V321.8h-1zM827 269.7h1V325.1h-1zM828 265.9h1V328.9h-1zM829 259.8h1V324.4h-1zM830 271.7h1V316.0h-1zM831 271.6h1V306.9h-1zM832 279.0h1V303.2h-1zM833 284.7h1V302.7h-1zM834 280.7h1V303.6h-1zM835 284.4h1V304.6h-1zM836 285.1h1V304.0h-1zM837 283.1h1V303.0h-1zM838 284.9h1V302.2h-1zM839 286.7h1V298.5h-1zM840 287.9h1V297.1h-1zM841 284.8h1V297.9h-1zM842 281.0h1V301.8h-1zM843 279.5h1V311.6h-1zM844 278.1h1V311.8h-1zM845 271.2h1V318.3h-1zM846 274.1h1V318.0h-1zM847 272.2h1V326.8h-1zM848 270.2h1V323.2h-1zM849 270.3h1V313.4h-1zM850 272.3h1V314.3h-1zM851 277.5h1V306.9h-1zM852 275.1h1V303.9h-1zM853 279.4h1V310.7h-1zM854 278.9h1V302.0h-1zM855 277.6h1V307.5h-1zM856 275.0h1V316.0h-1zM857 270.9h1V318.6h-1zM858 274.4h1V319.6h-1zM859 276.5h1V313.1h-1zM860 280.7h1V303.5h-1zM861 278.3h1V311.4h-1zM862 279.7h1V311.0h-1zM863 278.3h1V304.6h-1zM864 277.8h1V303.0h-1zM865 280.2h1V304.3h-1zM866 284.1h1V302.7h-1zM867 281.5h1V305.6h-1zM868 279.4h1V305.2h-1zM869 282.4h1V303.1h-1zM870 283.5h1V301.2h-1zM871 285.6h1V300.0h-1zM872 286.1h1V300.4h-1zM873 286.1h1V299.3h-1zM874 287.6h1V299.8h-1zM875 286.8h1V297.2h-1zM876 287.0h1V298.7h-1zM877 286.9h1V299.9h-1zM878 287.3h1V299.5h-1zM879 284.7h1V303.3h-1zM880 275.1h1V312.5h-1zM881 269.2h1V313.9h-1zM882 263.9h1V315.3h-1zM883 253.7h1V325.6h-1zM884 250.1h1V320.5h-1zM885 258.8h1V327.6h-1zM886 268.4h1V311.6h-1zM887 274.1h1V319.5h-1zM888 270.3h1V312.2h-1zM889 262.6h1V323.2h-1zM890 261.9h1V318.5h-1zM891 271.4h1V318.9h-1zM892 275.4h1V315.1h-1zM893 265.2h1V310.9h-1zM894 272.9h1V307.6h-1zM895 283.6h1V296.7h-1zM896 288.0h1V293.7h-1zM897 290.6h1V292.2h-1zM898 286.7h1V297.2h-1zM899 285.2h1V301.7h-1zM900 282.3h1V305.1h-1zM901 280.8h1V308.6h-1zM902 286.8h1V301.0h-1zM903 286.2h1V297.0h-1zM904 290.6h1V292.2h-1zM905 290.6h1V292.2h-1zM906 290.6h1V292.2h-1zM907 290.6h1V292.2h-1zM908 290.6h1V292.2h-1zM909 290.6h1V292.2h-1zM910 290.6h1V292.2h-1zM911 290.6h1V292.2h-1zM912 290.6h1V292.2h-1zM913 290.6h1V292.2h-1zM914 290.6h1V292.2h-1zM915 290.6h1V292.2h-1zM916 290.6h1V292.2h-1zM917 290.6h1V292.2h-1z" fill="#3e50d0" shape-rendering="crispEdges"/><path d="M153 289.4h1V293.4h-1zM154 287.7h1V295.1h-1zM155 288.0h1V294.8h-1zM156 287.7h1V295.1h-1zM157 287.7h1V295.1h-1zM158 287.1h1V295.7h-1zM159 288.1h1V294.7h-1zM160 287.7h1V295.1h-1zM161 288.0h1V294.8h-1zM162 287.6h1V295.2h-1zM163 287.8h1V295.0h-1zM164 288.0h1V294.8h-1zM165 287.4h1V295.4h-1zM166 287.1h1V295.7h-1zM167 287.3h1V295.5h-1zM168 287.6h1V295.2h-1zM169 287.7h1V295.1h-1zM170 287.1h1V295.7h-1zM171 287.9h1V294.9h-1zM172 287.5h1V295.3h-1zM173 287.2h1V295.6h-1zM174 287.5h1V295.3h-1zM175 287.4h1V295.4h-1zM176 287.9h1V294.9h-1zM177 286.8h1V296.0h-1zM178 287.7h1V295.1h-1zM179 287.0h1V295.8h-1zM180 287.6h1V295.2h-1zM181 287.2h1V295.6h-1zM182 287.2h1V295.6h-1zM183 287.0h1V295.8h-1zM184 287.4h1V295.4h-1zM185 288.4h1V294.4h-1zM186 289.1h1V293.7h-1zM187 288.5h1V294.3h-1zM188 287.8h1V295.0h-1zM189 287.1h1V295.7h-1zM190 287.5h1V295.3h-1zM191 286.8h1V296.0h-1zM192 286.8h1V296.0h-1zM193 286.9h1V295.9h-1zM194 287.7h1V295.1h-1zM195 287.5h1V295.3h-1zM196 287.6h1V295.2h-1zM197 287.4h1V295.4h-1zM198 287.1h1V295.7h-1zM199 287.5h1V295.3h-1zM200 287.3h1V295.5h-1zM201 286.9h1V295.9h-1zM202 286.1h1V296.7h-1zM203 286.3h1V296.5h-1zM204 284.7h1V298.1h-1zM205 285.2h1V297.6h-1zM206 284.7h1V298.1h-1zM207 285.0h1V297.8h-1zM208 284.6h1V298.2h-1zM209 284.1h1V298.7h-1zM210 284.4h1V298.4h-1zM211 284.6h1V298.2h-1zM212 285.9h1V296.9h-1zM213 285.4h1V297.4h-1zM214 285.8h1V297.0h-1zM215 285.0h1V297.8h-1zM216 285.6h1V297.2h-1zM217 285.5h1V297.3h-1zM754 287.8h1V295.0h-1zM755 285.6h1V297.2h-1zM756 286.1h1V296.7h-1zM757 284.4h1V298.4h-1zM758 285.6h1V297.2h-1zM759 284.3h1V298.5h-1zM760 284.6h1V298.2h-1zM761 285.3h1V297.5h-1zM762 285.4h1V297.4h-1zM763 284.2h1V298.6h-1zM764 285.2h1V297.6h-1zM765 285.2h1V297.6h-1zM766 286.0h1V296.8h-1zM767 287.7h1V295.1h-1zM768 287.7h1V295.1h-1zM769 288.7h1V294.1h-1zM770 289.3h1V293.5h-1zM771 289.7h1V293.1h-1zM772 289.5h1V293.3h-1zM773 289.6h1V293.2h-1zM774 289.7h1V293.1h-1zM775 289.7h1V293.1h-1zM776 289.6h1V293.2h-1zM777 289.6h1V293.2h-1zM778 289.3h1V293.5h-1zM779 289.5h1V293.3h-1zM780 289.5h1V293.3h-1zM781 289.6h1V293.2h-1zM782 289.6h1V293.2h-1zM783 289.3h1V293.5h-1zM784 289.6h1V293.2h-1zM785 289.0h1V293.8h-1zM786 289.2h1V293.6h-1zM787 289.2h1V293.6h-1zM788 289.3h1V293.5h-1zM789 289.5h1V293.3h-1zM790 289.3h1V293.5h-1zM791 289.1h1V293.7h-1zM792 289.4h1V293.4h-1zM793 289.1h1V293.7h-1zM794 289.3h1V293.5h-1zM795 287.4h1V295.4h-1zM796 287.4h1V295.4h-1zM797 287.4h1V295.4h-1zM798 286.6h1V296.2h-1zM799 287.3h1V295.5h-1zM800 287.4h1V295.4h-1zM801 286.6h1V296.2h-1zM802 287.2h1V295.6h-1zM803 286.5h1V296.3h-1zM804 287.4h1V295.4h-1zM805 287.2h1V295.6h-1zM806 286.5h1V296.3h-1zM807 286.8h1V296.0h-1zM808 287.4h1V295.4h-1zM809 287.3h1V295.5h-1zM810 286.7h1V296.1h-1zM811 286.6h1V296.2h-1zM812 287.2h1V295.6h-1zM813 286.9h1V295.9h-1zM814 287.6h1V295.2h-1zM815 287.3h1V295.5h-1zM816 286.4h1V296.4h-1zM817 286.2h1V296.6h-1zM818 285.3h1V297.5h-1zM819 284.7h1V298.1h-1zM820 284.9h1V297.9h-1zM821 285.0h1V297.8h-1zM822 284.1h1V298.7h-1zM823 285.6h1V297.2h-1zM824 284.0h1V298.8h-1zM825 284.0h1V298.8h-1zM826 284.0h1V298.8h-1zM827 284.1h1V298.7h-1zM828 283.7h1V299.1h-1zM829 285.0h1V297.8h-1zM830 284.2h1V298.6h-1zM831 284.0h1V298.8h-1zM832 284.5h1V298.3h-1zM833 285.9h1V296.9h-1zM834 285.5h1V297.3h-1zM835 285.6h1V297.2h-1zM836 286.1h1V296.7h-1zM837 286.6h1V296.2h-1zM838 286.7h1V296.1h-1zM839 287.0h1V295.8h-1zM840 287.9h1V294.9h-1zM841 286.5h1V296.3h-1zM842 286.9h1V295.9h-1zM843 287.2h1V295.6h-1zM844 287.2h1V295.6h-1zM845 286.2h1V296.6h-1zM846 286.6h1V296.2h-1zM847 287.0h1V295.8h-1zM848 286.3h1V296.5h-1zM849 286.7h1V296.1h-1zM850 286.6h1V296.2h-1zM851 287.2h1V295.6h-1zM852 286.4h1V296.4h-1zM853 286.4h1V296.4h-1zM854 286.7h1V296.1h-1zM855 286.7h1V296.1h-1zM856 287.4h1V295.4h-1zM857 287.0h1V295.8h-1zM858 286.5h1V296.3h-1zM859 286.9h1V295.9h-1zM860 287.1h1V295.7h-1zM861 286.4h1V296.4h-1zM862 286.9h1V295.9h-1zM863 286.5h1V296.3h-1zM864 287.2h1V295.6h-1zM865 287.0h1V295.8h-1zM866 287.0h1V295.8h-1zM867 286.8h1V296.0h-1zM868 286.6h1V296.2h-1zM869 286.7h1V296.1h-1zM870 287.1h1V295.7h-1zM871 286.7h1V296.1h-1zM872 287.0h1V295.8h-1zM873 287.6h1V295.2h-1zM874 287.6h1V295.2h-1zM875 287.5h1V295.3h-1zM876 288.4h1V294.4h-1zM877 288.2h1V294.6h-1zM878 288.7h1V294.1h-1zM879 287.3h1V295.5h-1zM880 285.4h1V297.4h-1zM881 283.5h1V299.3h-1zM882 282.8h1V300.0h-1zM883 282.7h1V300.1h-1zM884 282.1h1V300.7h-1zM885 283.3h1V299.5h-1zM886 282.8h1V300.0h-1zM887 282.4h1V300.4h-1zM888 282.4h1V300.4h-1zM889 284.6h1V298.2h-1zM890 284.2h1V298.6h-1zM891 283.5h1V299.3h-1zM892 284.9h1V297.9h-1zM893 283.8h1V299.0h-1zM894 286.3h1V296.5h-1zM895 288.9h1V293.9h-1zM896 289.5h1V293.3h-1zM897 290.6h1V292.2h-1zM898 288.6h1V294.2h-1zM899 287.9h1V294.9h-1zM900 288.4h1V294.4h-1zM901 289.0h1V293.8h-1zM902 289.4h1V293.4h-1zM903 290.1h1V292.7h-1zM904 290.6h1V292.2h-1zM905 290.6h1V292.2h-1z" fill="#7684dc" shape-rendering="crispEdges"/><path d="M145 441.2h1V442.8h-1zM146 441.2h1V442.8h-1zM147 441.2h1V442.8h-1zM148 441.2h1V442.8h-1zM149 441.2h1V442.8h-1zM150 441.2h1V442.8h-1zM151 441.2h1V442.8h-1zM152 441.2h1V442.8h-1zM153 438.2h1V448.3h-1zM154 433.7h1V453.2h-1zM155 432.5h1V457.0h-1zM156 436.1h1V458.0h-1zM157 430.8h1V450.0h-1zM158 429.5h1V450.2h-1zM159 427.0h1V449.6h-1zM160 428.9h1V459.8h-1zM161 430.8h1V458.5h-1zM162 431.8h1V457.1h-1zM163 433.6h1V452.0h-1zM164 433.0h1V451.0h-1zM165 431.6h1V451.1h-1zM166 435.6h1V451.8h-1zM167 436.4h1V448.7h-1zM168 434.6h1V451.5h-1zM169 434.9h1V450.3h-1zM170 436.2h1V451.8h-1zM171 436.0h1V451.9h-1zM172 436.6h1V454.9h-1zM173 436.5h1V452.3h-1zM174 434.2h1V448.3h-1zM175 434.1h1V449.1h-1zM176 433.8h1V448.3h-1zM177 435.0h1V449.5h-1zM178 428.9h1V453.4h-1zM179 426.8h1V465.8h-1zM180 423.0h1V463.9h-1zM181 420.8h1V464.3h-1zM182 425.6h1V455.9h-1zM183 426.0h1V452.5h-1zM184 429.0h1V457.5h-1zM185 431.1h1V452.1h-1zM186 434.8h1V447.5h-1zM187 433.6h1V448.8h-1zM188 433.5h1V450.4h-1zM189 432.7h1V452.7h-1zM190 432.5h1V449.3h-1zM191 433.7h1V453.1h-1zM192 428.5h1V456.5h-1zM193 431.0h1V461.3h-1zM194 431.1h1V455.8h-1zM195 425.5h1V459.0h-1zM196 426.9h1V460.6h-1zM197 430.9h1V463.0h-1zM198 429.4h1V464.5h-1zM199 428.3h1V460.9h-1zM200 430.0h1V456.9h-1zM201 434.4h1V456.7h-1zM202 435.2h1V451.7h-1zM203 430.4h1V453.8h-1zM204 414.0h1V461.3h-1zM205 420.1h1V464.2h-1zM206 427.1h1V461.4h-1zM207 429.2h1V460.7h-1zM208 421.5h1V458.1h-1zM209 430.7h1V455.7h-1zM210 428.1h1V453.7h-1zM211 433.2h1V456.3h-1zM212 432.6h1V450.0h-1zM213 430.2h1V448.0h-1zM214 430.4h1V450.7h-1zM215 431.7h1V452.7h-1zM216 434.1h1V449.7h-1zM217 435.8h1V451.2h-1zM748 441.2h1V442.8h-1zM749 441.2h1V442.8h-1zM750 441.2h1V442.8h-1zM751 441.2h1V442.8h-1zM752 441.2h1V442.8h-1zM753 441.2h1V442.8h-1zM754 432.6h1V454.9h-1zM755 426.2h1V461.5h-1zM756 413.7h1V469.8h-1zM757 420.8h1V464.8h-1zM758 411.7h1V466.2h-1zM759 421.7h1V470.8h-1zM760 427.3h1V469.6h-1zM761 425.7h1V469.9h-1zM762 421.7h1V457.3h-1zM763 416.5h1V458.2h-1zM764 420.6h1V463.4h-1zM765 427.5h1V454.3h-1zM766 428.3h1V455.6h-1zM767 433.0h1V449.8h-1zM768 434.8h1V445.7h-1zM769 433.3h1V449.6h-1zM770 437.0h1V451.0h-1zM771 437.9h1V446.5h-1zM772 439.2h1V445.9h-1zM773 437.9h1V444.9h-1zM774 438.2h1V445.5h-1zM775 438.4h1V444.2h-1zM776 438.0h1V444.1h-1zM777 437.7h1V444.9h-1zM778 439.2h1V444.8h-1zM779 439.3h1V446.4h-1zM780 437.1h1V446.6h-1zM781 438.7h1V445.9h-1zM782 437.7h1V444.8h-1zM783 437.0h1V445.4h-1zM784 438.4h1V445.3h-1zM785 437.4h1V446.7h-1zM786 439.3h1V445.0h-1zM787 437.4h1V445.7h-1zM788 438.1h1V445.0h-1zM789 438.8h1V445.0h-1zM790 438.9h1V446.6h-1zM791 438.1h1V445.9h-1zM792 438.7h1V445.2h-1zM793 438.8h1V446.3h-1zM794 438.9h1V445.2h-1zM795 429.0h1V457.2h-1zM796 431.2h1V455.3h-1zM797 424.6h1V453.9h-1zM798 424.0h1V456.3h-1zM799 425.8h1V462.5h-1zM800 426.0h1V462.1h-1zM801 422.0h1V455.8h-1zM802 423.4h1V460.9h-1zM803 432.1h1V456.4h-1zM804 431.8h1V457.8h-1zM805 428.2h1V450.5h-1zM806 427.1h1V457.5h-1zM807 426.4h1V458.4h-1zM808 431.0h1V456.5h-1zM809 427.4h1V457.8h-1zM810 433.1h1V459.3h-1zM811 430.3h1V455.0h-1zM812 431.8h1V453.0h-1zM813 433.8h1V449.5h-1zM814 433.7h1V451.8h-1zM815 434.8h1V448.4h-1zM816 434.7h1V455.0h-1zM817 432.2h1V459.2h-1zM818 433.4h1V463.7h-1zM819 426.2h1V464.6h-1zM820 422.8h1V461.0h-1zM821 424.4h1V459.9h-1zM822 425.8h1V467.1h-1zM823 430.5h1V462.3h-1zM824 433.3h1V459.9h-1zM825 429.0h1V468.1h-1zM826 423.4h1V472.4h-1zM827 420.3h1V475.7h-1zM828 416.5h1V479.5h-1zM829 410.4h1V475.0h-1zM830 422.3h1V466.6h-1zM831 422.2h1V457.5h-1zM832 429.6h1V453.8h-1zM833 435.3h1V453.3h-1zM834 431.3h1V454.2h-1zM835 435.0h1V455.2h-1zM836 435.7h1V454.6h-1zM837 433.7h1V453.6h-1zM838 435.5h1V452.8h-1zM839 437.3h1V449.1h-1zM840 438.5h1V447.7h-1zM841 435.4h1V448.5h-1zM842 431.6h1V452.4h-1zM843 430.1h1V462.2h-1zM844 428.7h1V462.4h-1zM845 421.8h1V468.9h-1zM846 424.7h1V468.6h-1zM847 422.8h1V477.4h-1zM848 420.8h1V473.8h-1zM849 420.9h1V464.0h-1zM850 422.9h1V464.9h-1zM851 428.1h1V457.5h-1zM852 425.7h1V454.5h-1zM853 430.0h1V461.3h-1zM854 429.5h1V452.6h-1zM855 428.2h1V458.1h-1zM856 425.6h1V466.6h-1zM857 421.5h1V469.2h-1zM858 425.0h1V470.2h-1zM859 427.1h1V463.7h-1zM860 431.3h1V454.1h-1zM861 428.9h1V462.0h-1zM862 430.3h1V461.6h-1zM863 428.9h1V455.2h-1zM864 428.4h1V453.6h-1zM865 430.8h1V454.9h-1zM866 434.7h1V453.3h-1zM867 432.1h1V456.2h-1zM868 430.0h1V455.8h-1zM869 433.0h1V453.7h-1zM870 434.1h1V451.8h-1zM871 436.2h1V450.6h-1zM872 436.7h1V451.0h-1zM873 436.7h1V449.9h-1zM874 438.2h1V450.4h-1zM875 437.4h1V447.8h-1zM876 437.6h1V449.3h-1zM877 437.5h1V450.5h-1zM878 437.9h1V450.1h-1zM879 435.3h1V453.9h-1zM880 425.7h1V463.1h-1zM881 419.8h1V464.5h-1zM882 414.5h1V465.9h-1zM883 404.3h1V476.2h-1zM884 400.7h1V471.1h-1zM885 409.4h1V478.2h-1zM886 419.0h1V462.2h-1zM887 424.7h1V470.1h-1zM888 420.9h1V462.8h-1zM889 413.2h1V473.8h-1zM890 412.5h1V469.1h-1zM891 422.0h1V469.5h-1zM892 426.0h1V465.7h-1zM893 415.8h1V461.5h-1zM894 423.5h1V458.2h-1zM895 434.2h1V447.3h-1zM896 438.6h1V444.3h-1zM897 441.2h1V442.8h-1zM898 437.3h1V447.8h-1zM899 435.8h1V452.3h-1zM900 432.9h1V455.7h-1zM901 431.4h1V459.2h-1zM902 437.4h1V451.6h-1zM903 436.8h1V447.6h-1zM904 441.2h1V442.8h-1zM905 441.2h1V442.8h-1zM906 441.2h1V442.8h-1zM907 441.2h1V442.8h-1zM908 441.2h1V442.8h-1zM909 441.2h1V442.8h-1zM910 441.2h1V442.8h-1zM911 441.2h1V442.8h-1zM912 441.2h1V442.8h-1zM913 441.2h1V442.8h-1zM914 441.2h1V442.8h-1zM915 441.2h1V442.8h-1zM916 441.2h1V442.8h-1zM917 441.2h1V442.8h-1z" fill="#3e50d0" shape-rendering="crispEdges"/><path d="M153 440.0h1V444.0h-1zM154 438.3h1V445.7h-1zM155 438.6h1V445.4h-1zM156 438.3h1V445.7h-1zM157 438.3h1V445.7h-1zM158 437.7h1V446.3h-1zM159 438.7h1V445.3h-1zM160 438.3h1V445.7h-1zM161 438.6h1V445.4h-1zM162 438.2h1V445.8h-1zM163 438.4h1V445.6h-1zM164 438.6h1V445.4h-1zM165 438.0h1V446.0h-1zM166 437.7h1V446.3h-1zM167 437.9h1V446.1h-1zM168 438.2h1V445.8h-1zM169 438.3h1V445.7h-1zM170 437.7h1V446.3h-1zM171 438.5h1V445.5h-1zM172 438.1h1V445.9h-1zM173 437.8h1V446.2h-1zM174 438.1h1V445.9h-1zM175 438.0h1V446.0h-1zM176 438.5h1V445.5h-1zM177 437.4h1V446.6h-1zM178 438.3h1V445.7h-1zM179 437.6h1V446.4h-1zM180 438.2h1V445.8h-1zM181 437.8h1V446.2h-1zM182 437.8h1V446.2h-1zM183 437.6h1V446.4h-1zM184 438.0h1V446.0h-1zM185 439.0h1V445.0h-1zM186 439.7h1V444.3h-1zM187 439.1h1V444.9h-1zM188 438.4h1V445.6h-1zM189 437.7h1V446.3h-1zM190 438.1h1V445.9h-1zM191 437.4h1V446.6h-1zM192 437.4h1V446.6h-1zM193 437.5h1V446.5h-1zM194 438.3h1V445.7h-1zM195 438.1h1V445.9h-1zM196 438.2h1V445.8h-1zM197 438.0h1V446.0h-1zM198 437.7h1V446.3h-1zM199 438.1h1V445.9h-1zM200 437.9h1V446.1h-1zM201 437.5h1V446.5h-1zM202 436.7h1V447.3h-1zM203 436.9h1V447.1h-1zM204 435.3h1V448.7h-1zM205 435.8h1V448.2h-1zM206 435.3h1V448.7h-1zM207 435.6h1V448.4h-1zM208 435.2h1V448.8h-1zM209 434.7h1V449.3h-1zM210 435.0h1V449.0h-1zM211 435.2h1V448.8h-1zM212 436.5h1V447.5h-1zM213 436.0h1V448.0h-1zM214 436.4h1V447.6h-1zM215 435.6h1V448.4h-1zM216 436.2h1V447.8h-1zM217 436.1h1V447.9h-1zM754 438.4h1V445.6h-1zM755 436.2h1V447.8h-1zM756 436.7h1V447.3h-1zM757 435.0h1V449.0h-1zM758 436.2h1V447.8h-1zM759 434.9h1V449.1h-1zM760 435.2h1V448.8h-1zM761 435.9h1V448.1h-1zM762 436.0h1V448.0h-1zM763 434.8h1V449.2h-1zM764 435.8h1V448.2h-1zM765 435.8h1V448.2h-1zM766 436.6h1V447.4h-1zM767 438.3h1V445.7h-1zM768 438.3h1V445.7h-1zM769 439.3h1V444.7h-1zM770 439.9h1V444.1h-1zM771 440.3h1V443.7h-1zM772 440.1h1V443.9h-1zM773 440.2h1V443.8h-1zM774 440.3h1V443.7h-1zM775 440.3h1V443.7h-1zM776 440.2h1V443.8h-1zM777 440.2h1V443.8h-1zM778 439.9h1V444.1h-1zM779 440.1h1V443.9h-1zM780 440.1h1V443.9h-1zM781 440.2h1V443.8h-1zM782 440.2h1V443.8h-1zM783 439.9h1V444.1h-1zM784 440.2h1V443.8h-1zM785 439.6h1V444.4h-1zM786 439.8h1V444.2h-1zM787 439.8h1V444.2h-1zM788 439.9h1V444.1h-1zM789 440.1h1V443.9h-1zM790 439.9h1V444.1h-1zM791 439.7h1V444.3h-1zM792 440.0h1V444.0h-1zM793 439.7h1V444.3h-1zM794 439.9h1V444.1h-1zM795 438.0h1V446.0h-1zM796 438.0h1V446.0h-1zM797 438.0h1V446.0h-1zM798 437.2h1V446.8h-1zM799 437.9h1V446.1h-1zM800 438.0h1V446.0h-1zM801 437.2h1V446.8h-1zM802 437.8h1V446.2h-1zM803 437.1h1V446.9h-1zM804 438.0h1V446.0h-1zM805 437.8h1V446.2h-1zM806 437.1h1V446.9h-1zM807 437.4h1V446.6h-1zM808 438.0h1V446.0h-1zM809 437.9h1V446.1h-1zM810 437.3h1V446.7h-1zM811 437.2h1V446.8h-1zM812 437.8h1V446.2h-1zM813 437.5h1V446.5h-1zM814 438.2h1V445.8h-1zM815 437.9h1V446.1h-1zM816 437.0h1V447.0h-1zM817 436.8h1V447.2h-1zM818 435.9h1V448.1h-1zM819 435.3h1V448.7h-1zM820 435.5h1V448.5h-1zM821 435.6h1V448.4h-1zM822 434.7h1V449.3h-1zM823 436.2h1V447.8h-1zM824 434.6h1V449.4h-1zM825 434.6h1V449.4h-1zM826 434.6h1V449.4h-1zM827 434.7h1V449.3h-1zM828 434.3h1V449.7h-1zM829 435.6h1V448.4h-1zM830 434.8h1V449.2h-1zM831 434.6h1V449.4h-1zM832 435.1h1V448.9h-1zM833 436.5h1V447.5h-1zM834 436.1h1V447.9h-1zM835 436.2h1V447.8h-1zM836 436.7h1V447.3h-1zM837 437.2h1V446.8h-1zM838 437.3h1V446.7h-1zM839 437.6h1V446.4h-1zM840 438.5h1V445.5h-1zM841 437.1h1V446.9h-1zM842 437.5h1V446.5h-1zM843 437.8h1V446.2h-1zM844 437.8h1V446.2h-1zM845 436.8h1V447.2h-1zM846 437.2h1V446.8h-1zM847 437.6h1V446.4h-1zM848 436.9h1V447.1h-1zM849 437.3h1V446.7h-1zM850 437.2h1V446.8h-1zM851 437.8h1V446.2h-1zM852 437.0h1V447.0h-1zM853 437.0h1V447.0h-1zM854 437.3h1V446.7h-1zM855 437.3h1V446.7h-1zM856 438.0h1V446.0h-1zM857 437.6h1V446.4h-1zM858 437.1h1V446.9h-1zM859 437.5h1V446.5h-1zM860 437.7h1V446.3h-1zM861 437.0h1V447.0h-1zM862 437.5h1V446.5h-1zM863 437.1h1V446.9h-1zM864 437.8h1V446.2h-1zM865 437.6h1V446.4h-1zM866 437.6h1V446.4h-1zM867 437.4h1V446.6h-1zM868 437.2h1V446.8h-1zM869 437.3h1V446.7h-1zM870 437.7h1V446.3h-1zM871 437.3h1V446.7h-1zM872 437.6h1V446.4h-1zM873 438.2h1V445.8h-1zM874 438.2h1V445.8h-1zM875 438.1h1V445.9h-1zM876 439.0h1V445.0h-1zM877 438.8h1V445.2h-1zM878 439.3h1V444.7h-1zM879 437.9h1V446.1h-1zM880 436.0h1V448.0h-1zM881 434.1h1V449.9h-1zM882 433.4h1V450.6h-1zM883 433.3h1V450.7h-1zM884 432.7h1V451.3h-1zM885 433.9h1V450.1h-1zM886 433.4h1V450.6h-1zM887 433.0h1V451.0h-1zM888 433.0h1V451.0h-1zM889 435.2h1V448.8h-1zM890 434.8h1V449.2h-1zM891 434.1h1V449.9h-1zM892 435.5h1V448.5h-1zM893 434.4h1V449.6h-1zM894 436.9h1V447.1h-1zM895 439.5h1V444.5h-1zM896 440.1h1V443.9h-1zM897 441.2h1V442.8h-1zM898 439.2h1V444.8h-1zM899 438.5h1V445.5h-1zM900 439.0h1V445.0h-1zM901 439.6h1V444.4h-1zM902 440.0h1V444.0h-1zM903 440.7h1V443.3h-1zM904 441.2h1V442.8h-1zM905 441.2h1V442.8h-1z" fill="#7684dc" shape-rendering="crispEdges"/></svg><div style="position:absolute;left:13px;top:627px;width:925px;height:16px;background:#ececec;border-top:1px solid #e0e0e0;box-sizing:border-box;"></div><div style="position:absolute;left:149px;top:627px;width:789px;height:16px;background:#fafafa;"></div><div style="position:absolute;left:152px;top:631px;width:631px;height:9px;background:linear-gradient(90deg,#c8c8c8,#b8b8b8 50%,#c4c4c4);border-radius:5px;"></div><div style="position:absolute;left:13px;top:643px;width:940px;height:1px;background:#d0d0d0;"></div><div style="position:absolute;left:17px;top:648px;width:5px;height:1px;background:#c9c9c9;"></div><div style="position:absolute;left:17px;top:649px;width:5px;height:1px;background:#fafafa;"></div><div style="position:absolute;left:17px;top:652px;width:5px;height:1px;background:#c9c9c9;"></div><div style="position:absolute;left:17px;top:653px;width:5px;height:1px;background:#fafafa;"></div><div style="position:absolute;left:17px;top:656px;width:5px;height:1px;background:#c9c9c9;"></div><div style="position:absolute;left:17px;top:657px;width:5px;height:1px;background:#fafafa;"></div><div style="position:absolute;left:17px;top:660px;width:5px;height:1px;background:#c9c9c9;"></div><div style="position:absolute;left:17px;top:661px;width:5px;height:1px;background:#fafafa;"></div><div style="position:absolute;left:17px;top:664px;width:5px;height:1px;background:#c9c9c9;"></div><div style="position:absolute;left:17px;top:665px;width:5px;height:1px;background:#fafafa;"></div><div style="position:absolute;left:17px;top:668px;width:5px;height:1px;background:#c9c9c9;"></div><div style="position:absolute;left:17px;top:669px;width:5px;height:1px;background:#fafafa;"></div><div style="position:absolute;left:17px;top:672px;width:5px;height:1px;background:#c9c9c9;"></div><div style="position:absolute;left:17px;top:673px;width:5px;height:1px;background:#fafafa;"></div><div style="position:absolute;left:17px;top:676px;width:5px;height:1px;background:#c9c9c9;"></div><div style="position:absolute;left:17px;top:677px;width:5px;height:1px;background:#fafafa;"></div><div style="position:absolute;left:17px;top:680px;width:5px;height:1px;background:#c9c9c9;"></div><div style="position:absolute;left:17px;top:681px;width:5px;height:1px;background:#fafafa;"></div><div style="position:absolute;left:17px;top:684px;width:5px;height:1px;background:#c9c9c9;"></div><div style="position:absolute;left:17px;top:685px;width:5px;height:1px;background:#fafafa;"></div><div style="position:absolute;left:17px;top:688px;width:5px;height:1px;background:#c9c9c9;"></div><div style="position:absolute;left:17px;top:689px;width:5px;height:1px;background:#fafafa;"></div><div style="position:absolute;left:17px;top:692px;width:5px;height:1px;background:#c9c9c9;"></div><div style="position:absolute;left:17px;top:693px;width:5px;height:1px;background:#fafafa;"></div><div style="position:absolute;left:30px;top:653px;white-space:nowrap;font-size:12px;color:#1a1a1a;line-height:14px;letter-spacing:0.15px;">Taux du projet (Hz)</div><div style="position:absolute;left:30px;top:671px;width:76px;height:21px;background:#fff;border:1px solid #c3c3c3;border-radius:3px;box-sizing:border-box;"><div style="position:absolute;left:58px;top:0;width:1px;height:19px;background:#d8d8d8"></div><svg style="position:absolute;left:63px;top:7px" width="9" height="6"><path d="M1 1 L4.5 4.5 L8 1" stroke="#333" stroke-width="1.3" fill="none"/></svg></div><div style="position:absolute;left:34px;top:675px;white-space:nowrap;font-size:12px;color:#1a1a1a;line-height:14px;">44100</div><div style="position:absolute;left:140px;top:661px;width:1px;height:5px;background:#c9c9c9;"></div><div style="position:absolute;left:140px;top:685px;width:1px;height:5px;background:#c9c9c9;"></div><div style="position:absolute;left:147px;top:653px;white-space:nowrap;font-size:12px;color:#1a1a1a;line-height:14px;">Se coller à (magnétique)</div><div style="position:absolute;left:147px;top:671px;width:106px;height:20.5px;background:#fff;border:1px solid #c3c3c3;border-radius:4px;box-sizing:border-box;box-shadow:0 0.5px 0.5px rgba(0,0,0,0.12);"></div><div style="position:absolute;left:155.5px;top:671.5px;white-space:nowrap;font-size:12px;color:#1a1a1a;line-height:16.5px;">Éteint</div><svg style="position:absolute;left:240.5px;top:674.25px" width="9" height="14" viewBox="0 0 9 14"><path d="M1.2 5.2 L4.5 1.8 L7.8 5.2 M1.2 8.8 L4.5 12.2 L7.8 8.8" fill="none" stroke="#3a3a3a" stroke-width="1.4"/></svg><div style="position:absolute;left:281px;top:661px;width:1px;height:5px;background:#c9c9c9;"></div><div style="position:absolute;left:281px;top:685px;width:1px;height:5px;background:#c9c9c9;"></div><div style="position:absolute;left:288px;top:653px;white-space:nowrap;font-size:12px;color:#1a1a1a;line-height:14px;">Position audio</div><div style="position:absolute;left:288px;top:671px;width:156px;height:22px;background:#fff;border:1px solid #a9a9a9;box-sizing:border-box;"></div><div style="position:absolute;left:290.5px;top:673px;width:151px;height:17.2px;background:#bfc3cc;"></div><div style="position:absolute;left:290.5px;top:673px;width:20.2px;height:17.2px;background:#d3d5da;"></div><div style="position:absolute;left:326.8px;top:673px;width:20.200000000000003px;height:17.2px;background:#d3d5da;"></div><div style="position:absolute;left:367.1px;top:673px;width:19.900000000000006px;height:17.2px;background:#d3d5da;"></div><div style="position:absolute;left:390.6px;top:673px;width:30.599999999999994px;height:17.2px;background:#d3d5da;"></div><div style="position:absolute;left:432.7px;top:673px;width:0.8px;height:17.2px;background:#fff;"></div><div style="position:absolute;left:290.3px;top:674.3px;white-space:nowrap;font-size:16.2px;color:#1a2ec9;line-height:17px;-webkit-text-stroke:0.45px #1a2ec9;"><div style="width:10px;text-align:center;transform:scaleX(0.8)">0</div></div><div style="position:absolute;left:300.4px;top:674.3px;white-space:nowrap;font-size:16.2px;color:#1a2ec9;line-height:17px;-webkit-text-stroke:0.45px #1a2ec9;"><div style="width:10px;text-align:center;transform:scaleX(0.8)">0</div></div><div style="position:absolute;left:326.5px;top:674.3px;white-space:nowrap;font-size:16.2px;color:#1a2ec9;line-height:17px;-webkit-text-stroke:0.45px #1a2ec9;"><div style="width:10px;text-align:center;transform:scaleX(0.8)">0</div></div><div style="position:absolute;left:336.5px;top:674.3px;white-space:nowrap;font-size:16.2px;color:#1a2ec9;line-height:17px;-webkit-text-stroke:0.45px #1a2ec9;"><div style="width:10px;text-align:center;transform:scaleX(0.8)">0</div></div><div style="position:absolute;left:366.5px;top:674.3px;white-space:nowrap;font-size:16.2px;color:#1a2ec9;line-height:17px;-webkit-text-stroke:0.45px #1a2ec9;"><div style="width:10px;text-align:center;transform:scaleX(0.8)">2</div></div><div style="position:absolute;left:376.3px;top:674.3px;white-space:nowrap;font-size:16.2px;color:#1a2ec9;line-height:17px;-webkit-text-stroke:0.45px #1a2ec9;"><div style="width:10px;text-align:center;transform:scaleX(0.8)">3</div></div><div style="position:absolute;left:389.9px;top:674.3px;white-space:nowrap;font-size:16.2px;color:#1a2ec9;line-height:17px;-webkit-text-stroke:0.45px #1a2ec9;"><div style="width:10px;text-align:center;transform:scaleX(0.8)">2</div></div><div style="position:absolute;left:400.4px;top:674.3px;white-space:nowrap;font-size:16.2px;color:#1a2ec9;line-height:17px;-webkit-text-stroke:0.45px #1a2ec9;"><div style="width:10px;text-align:center;transform:scaleX(0.8)">5</div></div><div style="position:absolute;left:410.6px;top:674.3px;white-space:nowrap;font-size:16.2px;color:#1a2ec9;line-height:17px;-webkit-text-stroke:0.45px #1a2ec9;"><div style="width:10px;text-align:center;transform:scaleX(0.8)">4</div></div><div style="position:absolute;left:312.8px;top:674.3px;white-space:nowrap;font-size:14.5px;color:#1a2ec9;line-height:17px;-webkit-text-stroke:0.4px #1a2ec9;"><div style="width:12px;text-align:center;transform:scaleX(0.8)">h</div></div><div style="position:absolute;left:350.6px;top:674.3px;white-space:nowrap;font-size:15px;color:#1a2ec9;line-height:17px;-webkit-text-stroke:0.4px #1a2ec9;"><div style="width:12px;text-align:center;transform:scaleX(0.8)">m</div></div><div style="position:absolute;left:383.1px;top:674.3px;white-space:nowrap;font-size:16px;color:#1a2ec9;line-height:17px;-webkit-text-stroke:0.4px #1a2ec9;"><div style="width:12px;text-align:center;transform:scaleX(0.8)">.</div></div><div style="position:absolute;left:422.2px;top:674.3px;white-space:nowrap;font-size:15.5px;color:#1a2ec9;line-height:17px;-webkit-text-stroke:0.4px #1a2ec9;"><div style="width:12px;text-align:center;transform:scaleX(0.8)">s</div></div><svg style="position:absolute;left:433.5px;top:679.5px" width="9" height="6"><path d="M0.5 0.5 h8 l-4 5z" fill="#000"/></svg><div style="position:absolute;left:450px;top:661px;width:1px;height:5px;background:#c9c9c9;"></div><div style="position:absolute;left:450px;top:685px;width:1px;height:5px;background:#c9c9c9;"></div><div style="position:absolute;left:456px;top:649px;width:317px;height:20px;background:#fff;border:1px solid #c3c3c3;border-radius:4px;box-sizing:border-box;box-shadow:0 0.5px 0.5px rgba(0,0,0,0.12);"></div><div style="position:absolute;left:465px;top:651px;white-space:nowrap;font-size:12px;color:#1a1a1a;line-height:16px;">Début et fin de la sélection</div><svg style="position:absolute;left:760.5px;top:652.0px" width="9" height="14" viewBox="0 0 9 14"><path d="M1.2 5.2 L4.5 1.8 L7.8 5.2 M1.2 8.8 L4.5 12.2 L7.8 8.8" fill="none" stroke="#3a3a3a" stroke-width="1.4"/></svg><div style="position:absolute;left:457px;top:671px;width:156px;height:22px;background:#fff;border:1px solid #a9a9a9;box-sizing:border-box;"></div><div style="position:absolute;left:459.5px;top:673px;width:151px;height:17.2px;background:#bfc3cc;"></div><div style="position:absolute;left:459.5px;top:673px;width:20.2px;height:17.2px;background:#d3d5da;"></div><div style="position:absolute;left:495.8px;top:673px;width:20.200000000000003px;height:17.2px;background:#d3d5da;"></div><div style="position:absolute;left:536.1px;top:673px;width:19.900000000000006px;height:17.2px;background:#d3d5da;"></div><div style="position:absolute;left:559.6px;top:673px;width:30.599999999999994px;height:17.2px;background:#d3d5da;"></div><div style="position:absolute;left:601.7px;top:673px;width:0.8px;height:17.2px;background:#fff;"></div><div style="position:absolute;left:459.3px;top:674.3px;white-space:nowrap;font-size:16.2px;color:#1a2ec9;line-height:17px;-webkit-text-stroke:0.45px #1a2ec9;"><div style="width:10px;text-align:center;transform:scaleX(0.8)">0</div></div><div style="position:absolute;left:469.4px;top:674.3px;white-space:nowrap;font-size:16.2px;color:#1a2ec9;line-height:17px;-webkit-text-stroke:0.45px #1a2ec9;"><div style="width:10px;text-align:center;transform:scaleX(0.8)">0</div></div><div style="position:absolute;left:495.5px;top:674.3px;white-space:nowrap;font-size:16.2px;color:#1a2ec9;line-height:17px;-webkit-text-stroke:0.45px #1a2ec9;"><div style="width:10px;text-align:center;transform:scaleX(0.8)">0</div></div><div style="position:absolute;left:505.5px;top:674.3px;white-space:nowrap;font-size:16.2px;color:#1a2ec9;line-height:17px;-webkit-text-stroke:0.45px #1a2ec9;"><div style="width:10px;text-align:center;transform:scaleX(0.8)">0</div></div><div style="position:absolute;left:535.5px;top:674.3px;white-space:nowrap;font-size:16.2px;color:#1a2ec9;line-height:17px;-webkit-text-stroke:0.45px #1a2ec9;"><div style="width:10px;text-align:center;transform:scaleX(0.8)">2</div></div><div style="position:absolute;left:545.3px;top:674.3px;white-space:nowrap;font-size:16.2px;color:#1a2ec9;line-height:17px;-webkit-text-stroke:0.45px #1a2ec9;"><div style="width:10px;text-align:center;transform:scaleX(0.8)">3</div></div><div style="position:absolute;left:558.9px;top:674.3px;white-space:nowrap;font-size:16.2px;color:#1a2ec9;line-height:17px;-webkit-text-stroke:0.45px #1a2ec9;"><div style="width:10px;text-align:center;transform:scaleX(0.8)">2</div></div><div style="position:absolute;left:569.4px;top:674.3px;white-space:nowrap;font-size:16.2px;color:#1a2ec9;line-height:17px;-webkit-text-stroke:0.45px #1a2ec9;"><div style="width:10px;text-align:center;transform:scaleX(0.8)">5</div></div><div style="position:absolute;left:579.6px;top:674.3px;white-space:nowrap;font-size:16.2px;color:#1a2ec9;line-height:17px;-webkit-text-stroke:0.45px #1a2ec9;"><div style="width:10px;text-align:center;transform:scaleX(0.8)">4</div></div><div style="position:absolute;left:481.8px;top:674.3px;white-space:nowrap;font-size:14.5px;color:#1a2ec9;line-height:17px;-webkit-text-stroke:0.4px #1a2ec9;"><div style="width:12px;text-align:center;transform:scaleX(0.8)">h</div></div><div style="position:absolute;left:519.6px;top:674.3px;white-space:nowrap;font-size:15px;color:#1a2ec9;line-height:17px;-webkit-text-stroke:0.4px #1a2ec9;"><div style="width:12px;text-align:center;transform:scaleX(0.8)">m</div></div><div style="position:absolute;left:552.1px;top:674.3px;white-space:nowrap;font-size:16px;color:#1a2ec9;line-height:17px;-webkit-text-stroke:0.4px #1a2ec9;"><div style="width:12px;text-align:center;transform:scaleX(0.8)">.</div></div><div style="position:absolute;left:591.2px;top:674.3px;white-space:nowrap;font-size:15.5px;color:#1a2ec9;line-height:17px;-webkit-text-stroke:0.4px #1a2ec9;"><div style="width:12px;text-align:center;transform:scaleX(0.8)">s</div></div><svg style="position:absolute;left:602.5px;top:679.5px" width="9" height="6"><path d="M0.5 0.5 h8 l-4 5z" fill="#000"/></svg><div style="position:absolute;left:617.5px;top:671px;width:156px;height:22px;background:#fff;border:1px solid #a9a9a9;box-sizing:border-box;"></div><div style="position:absolute;left:620.0px;top:673px;width:151px;height:17.2px;background:#bfc3cc;"></div><div style="position:absolute;left:620.0px;top:673px;width:20.2px;height:17.2px;background:#d3d5da;"></div><div style="position:absolute;left:656.3px;top:673px;width:20.200000000000003px;height:17.2px;background:#d3d5da;"></div><div style="position:absolute;left:696.6px;top:673px;width:19.900000000000006px;height:17.2px;background:#d3d5da;"></div><div style="position:absolute;left:720.1px;top:673px;width:30.599999999999994px;height:17.2px;background:#d3d5da;"></div><div style="position:absolute;left:762.2px;top:673px;width:0.8px;height:17.2px;background:#fff;"></div><div style="position:absolute;left:619.8px;top:674.3px;white-space:nowrap;font-size:16.2px;color:#1a2ec9;line-height:17px;-webkit-text-stroke:0.45px #1a2ec9;"><div style="width:10px;text-align:center;transform:scaleX(0.8)">0</div></div><div style="position:absolute;left:629.9px;top:674.3px;white-space:nowrap;font-size:16.2px;color:#1a2ec9;line-height:17px;-webkit-text-stroke:0.45px #1a2ec9;"><div style="width:10px;text-align:center;transform:scaleX(0.8)">0</div></div><div style="position:absolute;left:656.0px;top:674.3px;white-space:nowrap;font-size:16.2px;color:#1a2ec9;line-height:17px;-webkit-text-stroke:0.45px #1a2ec9;"><div style="width:10px;text-align:center;transform:scaleX(0.8)">0</div></div><div style="position:absolute;left:666.0px;top:674.3px;white-space:nowrap;font-size:16.2px;color:#1a2ec9;line-height:17px;-webkit-text-stroke:0.45px #1a2ec9;"><div style="width:10px;text-align:center;transform:scaleX(0.8)">0</div></div><div style="position:absolute;left:696.0px;top:674.3px;white-space:nowrap;font-size:16.2px;color:#1a2ec9;line-height:17px;-webkit-text-stroke:0.45px #1a2ec9;"><div style="width:10px;text-align:center;transform:scaleX(0.8)">3</div></div><div style="position:absolute;left:705.8px;top:674.3px;white-space:nowrap;font-size:16.2px;color:#1a2ec9;line-height:17px;-webkit-text-stroke:0.45px #1a2ec9;"><div style="width:10px;text-align:center;transform:scaleX(0.8)">3</div></div><div style="position:absolute;left:719.4px;top:674.3px;white-space:nowrap;font-size:16.2px;color:#1a2ec9;line-height:17px;-webkit-text-stroke:0.45px #1a2ec9;"><div style="width:10px;text-align:center;transform:scaleX(0.8)">9</div></div><div style="position:absolute;left:729.9px;top:674.3px;white-space:nowrap;font-size:16.2px;color:#1a2ec9;line-height:17px;-webkit-text-stroke:0.45px #1a2ec9;"><div style="width:10px;text-align:center;transform:scaleX(0.8)">4</div></div><div style="position:absolute;left:740.1px;top:674.3px;white-space:nowrap;font-size:16.2px;color:#1a2ec9;line-height:17px;-webkit-text-stroke:0.45px #1a2ec9;"><div style="width:10px;text-align:center;transform:scaleX(0.8)">7</div></div><div style="position:absolute;left:642.3px;top:674.3px;white-space:nowrap;font-size:14.5px;color:#1a2ec9;line-height:17px;-webkit-text-stroke:0.4px #1a2ec9;"><div style="width:12px;text-align:center;transform:scaleX(0.8)">h</div></div><div style="position:absolute;left:680.1px;top:674.3px;white-space:nowrap;font-size:15px;color:#1a2ec9;line-height:17px;-webkit-text-stroke:0.4px #1a2ec9;"><div style="width:12px;text-align:center;transform:scaleX(0.8)">m</div></div><div style="position:absolute;left:712.6px;top:674.3px;white-space:nowrap;font-size:16px;color:#1a2ec9;line-height:17px;-webkit-text-stroke:0.4px #1a2ec9;"><div style="width:12px;text-align:center;transform:scaleX(0.8)">.</div></div><div style="position:absolute;left:751.7px;top:674.3px;white-space:nowrap;font-size:15.5px;color:#1a2ec9;line-height:17px;-webkit-text-stroke:0.4px #1a2ec9;"><div style="width:12px;text-align:center;transform:scaleX(0.8)">s</div></div><svg style="position:absolute;left:763.0px;top:679.5px" width="9" height="6"><path d="M0.5 0.5 h8 l-4 5z" fill="#000"/></svg><div style="position:absolute;left:13px;top:700px;width:940px;height:1px;background:#d0d0d0;"></div><div style="position:absolute;left:13px;top:701px;width:940px;height:23px;background:#f5f5f5;border-radius:0 0 5px 5px;"></div><div style="position:absolute;left:18px;top:705px;white-space:nowrap;font-size:12px;color:#555;line-height:14px;-webkit-text-stroke:0;">Arrêté.</div><div style="position:absolute;left:217px;top:102px;width:531px;height:514px;background:#ececec;border-radius:5px 5px 4px 4px;box-shadow:0 14px 32px rgba(0,0,0,0.55),0 0 0 0.5px rgba(0,0,0,0.3);overflow:hidden;"></div><div style="position:absolute;left:217px;top:102px;width:531px;height:22px;background:linear-gradient(#ececec,#d9d9d9);border-bottom:1px solid #c0c0c0;border-radius:5px 5px 0 0;box-sizing:border-box;"></div><div style="position:absolute;left:225px;top:107px;width:12px;height:12px;border-radius:50%;background:#fc605c;border:0.5px solid #df4744;box-sizing:border-box;"></div><div style="position:absolute;left:245px;top:107px;width:12px;height:12px;border-radius:50%;background:#fdbc40;border:0.5px solid #de9f34;box-sizing:border-box;"></div><div style="position:absolute;left:265px;top:107px;width:12px;height:12px;border-radius:50%;background:#34c84a;border:0.5px solid #27aa35;box-sizing:border-box;"></div><div style="position:absolute;left:442px;top:106px;white-space:nowrap;font-size:13.5px;color:#4a4a4a;line-height:16px;-webkit-text-stroke:0;">Compresseur</div><div style="position:absolute;left:273px;top:134px;width:465px;height:178px;background:#fff;border:1.3px solid #000;box-sizing:border-box;outline:1px solid #fafafa;"></div><div style="position:absolute;left:270px;top:152px;width:3px;height:1px;background:#000;"></div><div style="position:absolute;left:270px;top:169px;width:3px;height:1px;background:#000;"></div><div style="position:absolute;left:270px;top:187px;width:3px;height:1px;background:#000;"></div><div style="position:absolute;left:268px;top:205px;width:5px;height:1px;background:#000;"></div><div style="position:absolute;left:270px;top:222px;width:3px;height:1px;background:#000;"></div><div style="position:absolute;left:270px;top:240px;width:3px;height:1px;background:#000;"></div><div style="position:absolute;left:270px;top:258px;width:3px;height:1px;background:#000;"></div><div style="position:absolute;left:268px;top:276px;width:5px;height:1px;background:#000;"></div><div style="position:absolute;left:270px;top:293px;width:3px;height:1px;background:#000;"></div><div style="position:absolute;left:296px;top:311px;width:1px;height:3px;background:#000;"></div><div style="position:absolute;left:320px;top:311px;width:1px;height:3px;background:#000;"></div><div style="position:absolute;left:343px;top:311px;width:1px;height:3px;background:#000;"></div><div style="position:absolute;left:366px;top:311px;width:1px;height:4px;background:#000;"></div><div style="position:absolute;left:389px;top:311px;width:1px;height:3px;background:#000;"></div><div style="position:absolute;left:412px;top:311px;width:1px;height:3px;background:#000;"></div><div style="position:absolute;left:436px;top:311px;width:1px;height:3px;background:#000;"></div><div style="position:absolute;left:459px;top:311px;width:1px;height:4px;background:#000;"></div><div style="position:absolute;left:482px;top:311px;width:1px;height:3px;background:#000;"></div><div style="position:absolute;left:506px;top:311px;width:1px;height:3px;background:#000;"></div><div style="position:absolute;left:529px;top:311px;width:1px;height:3px;background:#000;"></div><div style="position:absolute;left:552px;top:311px;width:1px;height:4px;background:#000;"></div><div style="position:absolute;left:575px;top:311px;width:1px;height:3px;background:#000;"></div><div style="position:absolute;left:598px;top:311px;width:1px;height:3px;background:#000;"></div><div style="position:absolute;left:622px;top:311px;width:1px;height:3px;background:#000;"></div><div style="position:absolute;left:645px;top:311px;width:1px;height:4px;background:#000;"></div><div style="position:absolute;left:668px;top:311px;width:1px;height:3px;background:#000;"></div><div style="position:absolute;left:692px;top:311px;width:1px;height:3px;background:#000;"></div><div style="position:absolute;left:715px;top:311px;width:1px;height:3px;background:#000;"></div><div style="position:absolute;left:243px;top:134px;white-space:nowrap;font-size:12.5px;font-weight:bold;color:#000;line-height:14px;">0dB</div><div style="position:absolute;left:231px;top:198px;white-space:nowrap;font-size:12.5px;font-weight:bold;color:#000;line-height:14px;">-24dB</div><div style="position:absolute;left:231px;top:269px;white-space:nowrap;font-size:12.5px;font-weight:bold;color:#000;line-height:14px;">-48dB</div><div style="position:absolute;left:273px;top:314px;white-space:nowrap;font-size:12.5px;font-weight:bold;color:#000;line-height:14px;">-60dB</div><div style="position:absolute;left:348px;top:314px;white-space:nowrap;font-size:12.5px;font-weight:bold;color:#000;line-height:14px;">-48dB</div><div style="position:absolute;left:441px;top:314px;white-space:nowrap;font-size:12.5px;font-weight:bold;color:#000;line-height:14px;">-36dB</div><div style="position:absolute;left:534px;top:314px;white-space:nowrap;font-size:12.5px;font-weight:bold;color:#000;line-height:14px;">-24dB</div><div style="position:absolute;left:627px;top:314px;white-space:nowrap;font-size:12.5px;font-weight:bold;color:#000;line-height:14px;">-12dB</div><div style="position:absolute;left:713px;top:314px;white-space:nowrap;font-size:12.5px;font-weight:bold;color:#000;line-height:14px;">0dB</div><svg style="position:absolute;left:0;top:0" width="970" height="751"><path d="M275 292.5 L643 153.5 L737 136" stroke="#7b86d8" stroke-width="3" fill="none" stroke-linejoin="round"/></svg><div style="position:absolute;left:225px;top:351px;width:515px;height:171px;background:#e2e2e2;border:1px solid #d8d8d8;border-radius:4px;box-sizing:border-box;"></div><div style="position:absolute;left:150px;top:369.7px;white-space:nowrap;font-size:13.4px;color:#111;line-height:16px;"><div style="width:200px;text-align:right">Seuil :</div></div><div style="position:absolute;left:361px;top:375px;width:293px;height:3px;background:#b4b4b4;border-radius:2px;"></div><div style="position:absolute;left:361px;top:375px;width:233px;height:3px;background:#3b99fc;border-radius:2px;"></div><div style="position:absolute;left:586px;top:369px;width:16px;height:16px;border-radius:50%;background:#fff;box-shadow:0 0.5px 1.5px rgba(0,0,0,0.45);"></div><div style="position:absolute;left:665px;top:369.7px;white-space:nowrap;font-size:13.4px;color:#111;line-height:16px;">-12 dB</div><div style="position:absolute;left:150px;top:400.8px;white-space:nowrap;font-size:13.4px;color:#111;line-height:16px;"><div style="width:200px;text-align:right">Niveau de bruit :</div></div><div style="position:absolute;left:361px;top:406px;width:293px;height:3px;background:#b4b4b4;border-radius:2px;"></div><div style="position:absolute;left:361px;top:406px;width:192px;height:3px;background:#3b99fc;border-radius:2px;"></div><div style="position:absolute;left:545px;top:400px;width:16px;height:16px;border-radius:50%;background:#fff;box-shadow:0 0.5px 1.5px rgba(0,0,0,0.45);"></div><div style="position:absolute;left:665px;top:400.8px;white-space:nowrap;font-size:13.4px;color:#111;line-height:16px;">-40 dB</div><div style="position:absolute;left:150px;top:431.8px;white-space:nowrap;font-size:13.4px;color:#111;line-height:16px;"><div style="width:200px;text-align:right">Ratio :</div></div><div style="position:absolute;left:361px;top:437px;width:293px;height:3px;background:#b4b4b4;border-radius:2px;"></div><div style="position:absolute;left:361px;top:437px;width:38px;height:3px;background:#3b99fc;border-radius:2px;"></div><div style="position:absolute;left:391px;top:431px;width:16px;height:16px;border-radius:50%;background:#fff;box-shadow:0 0.5px 1.5px rgba(0,0,0,0.45);"></div><div style="position:absolute;left:665px;top:431.8px;white-space:nowrap;font-size:13.4px;color:#111;line-height:16px;">2,1:1</div><div style="position:absolute;left:150px;top:462.9px;white-space:nowrap;font-size:13.4px;color:#111;line-height:16px;"><div style="width:200px;text-align:right">Temps d’attaque :</div></div><div style="position:absolute;left:361px;top:468px;width:293px;height:3px;background:#b4b4b4;border-radius:2px;"></div><div style="position:absolute;left:360px;top:462px;width:16px;height:16px;border-radius:50%;background:#fff;box-shadow:0 0.5px 1.5px rgba(0,0,0,0.45);"></div><div style="position:absolute;left:665px;top:462.9px;white-space:nowrap;font-size:13.4px;color:#111;line-height:16px;">0,10 secs</div><div style="position:absolute;left:150px;top:494px;white-space:nowrap;font-size:13.4px;color:#111;line-height:16px;"><div style="width:200px;text-align:right">Temps de relâche :</div></div><div style="position:absolute;left:361px;top:500px;width:293px;height:3px;background:#b4b4b4;border-radius:2px;"></div><div style="position:absolute;left:360px;top:493px;width:16px;height:16px;border-radius:50%;background:#fff;box-shadow:0 0.5px 1.5px rgba(0,0,0,0.45);"></div><div style="position:absolute;left:665px;top:494px;white-space:nowrap;font-size:13.4px;color:#111;line-height:16px;">1,0 secs</div><div style="position:absolute;left:224px;top:538px;width:14px;height:14px;background:linear-gradient(#5aa8fc,#2f8cf7);border-radius:3px;"><svg style="position:absolute;left:2px;top:2px" width="10" height="10"><path d="M1.5 5 L4 8 L8.5 1.5" stroke="#fff" stroke-width="1.6" fill="none"/></svg></div><div style="position:absolute;left:243px;top:538px;white-space:nowrap;font-size:13.4px;color:#111;line-height:16px;">Compenser le gain à 0 dB après compression</div><div style="position:absolute;left:531px;top:538px;width:14px;height:14px;background:linear-gradient(#5aa8fc,#2f8cf7);border-radius:3px;"><svg style="position:absolute;left:2px;top:2px" width="10" height="10"><path d="M1.5 5 L4 8 L8.5 1.5" stroke="#fff" stroke-width="1.6" fill="none"/></svg></div><div style="position:absolute;left:550px;top:538px;white-space:nowrap;font-size:13.4px;color:#111;line-height:16px;">Compression basée sur les pics</div><div style="position:absolute;left:237px;top:576px;width:83px;height:20px;background:#fff;border:1px solid #c5c5c5;border-radius:4px;box-sizing:border-box;box-shadow:0 0.5px 1px rgba(0,0,0,0.15);font-size:13.4px;color:#111;text-align:center;line-height:18px;">Gestion</div><div style="position:absolute;left:326px;top:576px;width:83px;height:20px;background:#fff;border:1px solid #c5c5c5;border-radius:4px;box-sizing:border-box;box-shadow:0 0.5px 1px rgba(0,0,0,0.15);font-size:13.4px;color:#111;text-align:center;line-height:18px;">Pré-écoute</div><div style="position:absolute;left:491px;top:574px;width:21px;height:21px;border-radius:50%;background:linear-gradient(#8cc0fb,#6aa9f7);box-shadow:0 0.5px 1px rgba(0,0,0,0.3);color:#fff;font-size:17px;text-align:center;line-height:22px;">?</div><div style="position:absolute;left:544px;top:576px;width:83px;height:20px;background:#fff;border:1px solid #c5c5c5;border-radius:4px;box-sizing:border-box;box-shadow:0 0.5px 1px rgba(0,0,0,0.15);font-size:13.4px;color:#111;text-align:center;line-height:18px;">Annuler</div><div style="position:absolute;left:639px;top:576px;width:84px;height:20px;background:linear-gradient(#5eb0fc,#1a82f7);border-radius:4px;box-sizing:border-box;font-size:13.4px;color:#fff;text-align:center;line-height:20px;">Valider</div></body></html>
